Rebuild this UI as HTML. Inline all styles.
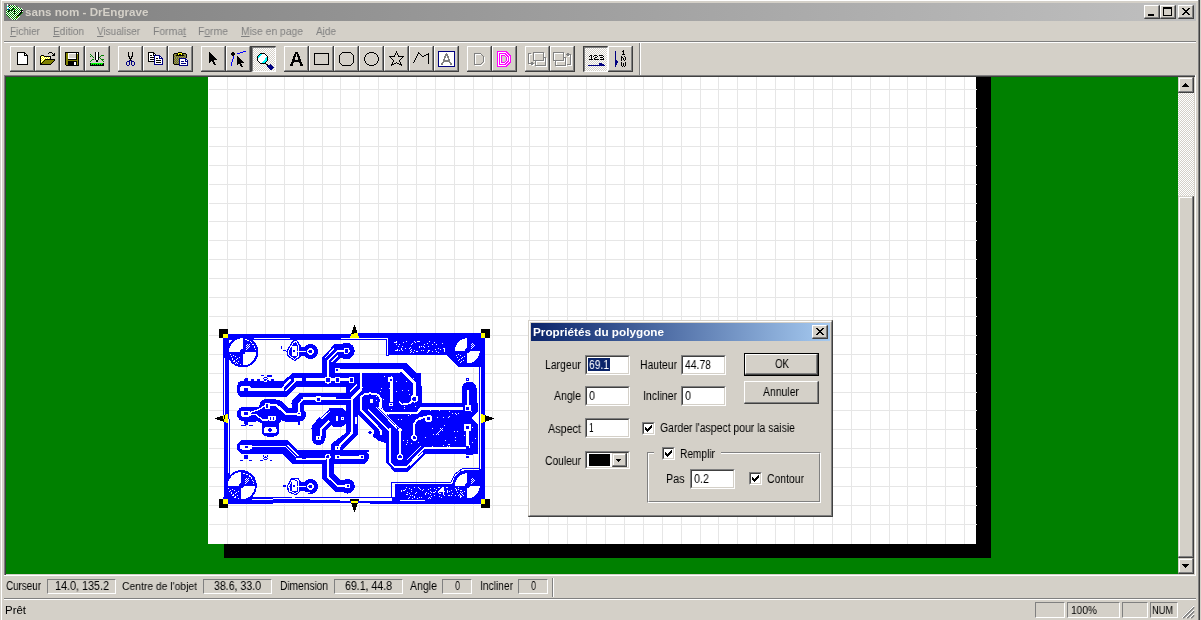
<!DOCTYPE html>
<html><head><meta charset="utf-8"><title>DrEngrave</title>
<style>
html,body{margin:0;padding:0;}
body{width:1201px;height:620px;overflow:hidden;position:relative;background:#D4D0C8;font-family:"Liberation Sans",sans-serif;font-size:11px;}
body div,body span.t,body svg{position:absolute;box-sizing:border-box;}
span.t{white-space:nowrap;transform-origin:0 0;display:block;will-change:transform;}
span.t u{text-decoration:underline;text-underline-offset:1px;}
.btn{border-style:solid;border-width:1px 2px 2px 1px;border-color:#fff #404040 #404040 #fff;background:#D4D0C8;}
.btn:after{content:"";position:absolute;left:0;top:0;right:-1px;bottom:-1px;border-right:1px solid #808080;border-bottom:1px solid #808080;}
.tb{border:1px solid;border-color:#fff #808080 #808080 #fff;}
.tb:after{content:"";position:absolute;left:-1px;top:-1px;right:-2px;bottom:-2px;border-right:1px solid #404040;border-bottom:1px solid #404040;}
.sunk{border:1px solid;border-color:#808080 #fff #fff #808080;}
.edit{border:1px solid;border-color:#808080 #fff #fff #808080;background:#fff;}
.edit:after{content:"";position:absolute;left:0;top:0;right:0;bottom:0;border:1px solid;border-color:#404040 #D4D0C8 #D4D0C8 #404040;}
.chk{background:repeating-conic-gradient(#fff 0% 25%,#D4D0C8 0% 50%) 0 0/2px 2px;}
</style></head><body>
<div style="left:0px;top:0px;width:1201px;height:1px;background:#fff;"></div>
<div style="left:0px;top:0px;width:1px;height:620px;background:#D4D0C8;"></div>
<div style="left:1px;top:0px;width:1px;height:620px;background:#fff;"></div>
<div style="left:1198px;top:0px;width:1px;height:620px;background:#808080;"></div>
<div style="left:1199px;top:0px;width:1px;height:620px;background:#404040;"></div>
<div style="left:1200px;top:0px;width:1px;height:620px;background:#D4D0C8;"></div>
<div style="left:4px;top:3px;width:1192px;height:18px;background:linear-gradient(to right,#808080 0%,#C0C0C0 100%);"></div>
<span class="t" style="left:24.5px;top:4px;font-size:11px;line-height:16px;color:#D4D0C8;font-weight:bold;transform:scaleX(1.0578);">sans nom - DrEngrave</span>
<div class="btn" style="left:1144px;top:5px;width:16px;height:14px;"></div>
<div style="left:1148px;top:14px;width:6px;height:2px;background:#000;"></div>
<div class="btn" style="left:1160px;top:5px;width:16px;height:14px;"></div>
<div style="left:1163px;top:7px;width:9px;height:9px;border:1px solid #000;border-top-width:2px;"></div>
<div class="btn" style="left:1178px;top:5px;width:16px;height:14px;"></div>
<svg style="left:1182px;top:8px" width="8" height="7" viewBox="0 0 8 7" shape-rendering="crispEdges"><path d="M0 0h2v1h-2zM6 0h2v1h-2zM1 1h2v1h-2zM5 1h2v1h-2zM2 2h4v1h-4zM3 3h2v1h-2zM2 4h4v1h-4zM1 5h2v1h-2zM5 5h2v1h-2zM0 6h2v1h-2zM6 6h2v1h-2z" fill="#000"/></svg>
<span class="t" style="left:10px;top:23px;font-size:11px;line-height:16px;color:#808080;transform:scaleX(0.9090);"><u>F</u>ichier</span>
<span class="t" style="left:53px;top:23px;font-size:11px;line-height:16px;color:#808080;transform:scaleX(0.9217);"><u>E</u>dition</span>
<span class="t" style="left:97px;top:23px;font-size:11px;line-height:16px;color:#808080;transform:scaleX(0.9056);"><u>V</u>isualiser</span>
<span class="t" style="left:153px;top:23px;font-size:11px;line-height:16px;color:#808080;transform:scaleX(0.9472);">Forma<u>t</u></span>
<span class="t" style="left:198px;top:23px;font-size:11px;line-height:16px;color:#808080;transform:scaleX(0.9440);">F<u>o</u>rme</span>
<span class="t" style="left:241px;top:23px;font-size:11px;line-height:16px;color:#808080;transform:scaleX(0.9388);"><u>M</u>ise en page</span>
<span class="t" style="left:316px;top:23px;font-size:11px;line-height:16px;color:#808080;transform:scaleX(0.9084);">A<u>i</u>de</span>
<div style="left:4px;top:41px;width:1192px;height:1px;background:#808080;"></div>
<div style="left:4px;top:42px;width:1192px;height:1px;background:#fff;"></div>
<div class="tb" style="left:10px;top:46px;width:24px;height:25px;"></div>
<div class="tb" style="left:35px;top:46px;width:24px;height:25px;"></div>
<div class="tb" style="left:60px;top:46px;width:24px;height:25px;"></div>
<div class="tb" style="left:85px;top:46px;width:24px;height:25px;"></div>
<div class="tb" style="left:118px;top:46px;width:24px;height:25px;"></div>
<div class="tb" style="left:143px;top:46px;width:24px;height:25px;"></div>
<div class="tb" style="left:168px;top:46px;width:24px;height:25px;"></div>
<div class="tb" style="left:201px;top:46px;width:24px;height:25px;"></div>
<div class="tb" style="left:226px;top:46px;width:24px;height:25px;"></div>
<div class="chk" style="left:251px;top:46px;width:25px;height:26px;border-style:solid;border-width:2px 1px 1px 2px;border-color:#404040 #fff #fff #404040;"></div>
<div style="left:252px;top:47px;width:23px;height:24px;border-left:1px solid #808080;border-top:1px solid #808080;"></div>
<div class="tb" style="left:284px;top:46px;width:24px;height:25px;"></div>
<div class="tb" style="left:309px;top:46px;width:24px;height:25px;"></div>
<div class="tb" style="left:334px;top:46px;width:24px;height:25px;"></div>
<div class="tb" style="left:359px;top:46px;width:24px;height:25px;"></div>
<div class="tb" style="left:384px;top:46px;width:24px;height:25px;"></div>
<div class="tb" style="left:409px;top:46px;width:24px;height:25px;"></div>
<div class="tb" style="left:434px;top:46px;width:24px;height:25px;"></div>
<div class="tb" style="left:467px;top:46px;width:24px;height:25px;"></div>
<div class="tb" style="left:492px;top:46px;width:24px;height:25px;"></div>
<div class="tb" style="left:525px;top:46px;width:24px;height:25px;"></div>
<div class="tb" style="left:550px;top:46px;width:24px;height:25px;"></div>
<div class="chk" style="left:583px;top:46px;width:25px;height:26px;border-style:solid;border-width:2px 1px 1px 2px;border-color:#404040 #fff #fff #404040;"></div>
<div style="left:584px;top:47px;width:23px;height:24px;border-left:1px solid #808080;border-top:1px solid #808080;"></div>
<div class="tb" style="left:608px;top:46px;width:24px;height:25px;"></div>
<div style="left:639px;top:43px;width:1px;height:32px;background:#808080;"></div>
<div style="left:640px;top:43px;width:1px;height:32px;background:#fff;"></div>
<svg style="left:17px;top:52px" width="11" height="13" shape-rendering="crispEdges"><path fill="#000" d="M0 0h8v1h-8zM0 1h1v1h-1zM7 1h2v1h-2zM0 2h1v1h-1zM7 2h1v1h-1zM9 2h1v1h-1zM0 3h1v1h-1zM7 3h4v1h-4zM0 4h1v1h-1zM10 4h1v1h-1zM0 5h1v1h-1zM10 5h1v1h-1zM0 6h1v1h-1zM10 6h1v1h-1zM0 7h1v1h-1zM10 7h1v1h-1zM0 8h1v1h-1zM10 8h1v1h-1zM0 9h1v1h-1zM10 9h1v1h-1zM0 10h1v1h-1zM10 10h1v1h-1zM0 11h1v1h-1zM10 11h1v1h-1zM0 12h11v1h-11z"/><path fill="#fff" d="M1 1h6v1h-6zM1 2h6v1h-6zM8 2h1v1h-1zM1 3h6v1h-6zM1 4h9v1h-9zM1 5h9v1h-9zM1 6h9v1h-9zM1 7h9v1h-9zM1 8h9v1h-9zM1 9h9v1h-9zM1 10h9v1h-9zM1 11h9v1h-9z"/></svg>
<svg style="left:40px;top:52px" width="15" height="13" shape-rendering="crispEdges"><path fill="#000" d="M9 0h3v1h-3zM8 1h1v1h-1zM12 1h1v1h-1zM14 1h1v1h-1zM13 2h2v1h-2zM1 3h3v1h-3zM12 3h3v1h-3zM0 4h1v1h-1zM4 4h7v1h-7zM0 5h1v1h-1zM10 5h1v1h-1zM0 6h1v1h-1zM10 6h1v1h-1zM0 7h1v1h-1zM5 7h10v1h-10zM0 8h1v1h-1zM4 8h1v1h-1zM14 8h1v1h-1zM0 9h1v1h-1zM3 9h1v1h-1zM13 9h1v1h-1zM0 10h1v1h-1zM2 10h1v1h-1zM12 10h1v1h-1zM0 11h2v1h-2zM11 11h1v1h-1zM0 12h11v1h-11z"/><path fill="#FFFF00" d="M1 4h1v1h-1zM3 4h1v1h-1zM2 5h1v1h-1zM4 5h1v1h-1zM6 5h1v1h-1zM8 5h1v1h-1zM1 6h1v1h-1zM3 6h1v1h-1zM5 6h1v1h-1zM7 6h1v1h-1zM9 6h1v1h-1zM2 7h1v1h-1zM4 7h1v1h-1zM1 8h1v1h-1zM3 8h1v1h-1zM2 9h1v1h-1zM1 10h1v1h-1z"/><path fill="#fff" d="M2 4h1v1h-1zM1 5h1v1h-1zM3 5h1v1h-1zM5 5h1v1h-1zM7 5h1v1h-1zM9 5h1v1h-1zM2 6h1v1h-1zM4 6h1v1h-1zM6 6h1v1h-1zM8 6h1v1h-1zM1 7h1v1h-1zM3 7h1v1h-1zM2 8h1v1h-1zM1 9h1v1h-1z"/><path fill="#808000" d="M5 8h9v1h-9zM4 9h9v1h-9zM3 10h9v1h-9zM2 11h9v1h-9z"/></svg>
<svg style="left:65px;top:52px" width="14" height="14" shape-rendering="crispEdges"><path fill="#000" d="M0 0h14v1h-14zM0 1h1v1h-1zM11 1h1v1h-1zM13 1h1v1h-1zM0 2h1v1h-1zM11 2h1v1h-1zM13 2h1v1h-1zM0 3h1v1h-1zM11 3h1v1h-1zM13 3h1v1h-1zM0 4h1v1h-1zM11 4h1v1h-1zM13 4h1v1h-1zM0 5h1v1h-1zM11 5h1v1h-1zM13 5h1v1h-1zM0 6h1v1h-1zM11 6h1v1h-1zM13 6h1v1h-1zM0 7h1v1h-1zM3 7h9v1h-9zM13 7h1v1h-1zM0 8h1v1h-1zM13 8h1v1h-1zM0 9h1v1h-1zM3 9h9v1h-9zM13 9h1v1h-1zM0 10h1v1h-1zM3 10h6v1h-6zM11 10h1v1h-1zM13 10h1v1h-1zM0 11h1v1h-1zM3 11h6v1h-6zM11 11h1v1h-1zM13 11h1v1h-1zM0 12h1v1h-1zM3 12h6v1h-6zM11 12h1v1h-1zM13 12h1v1h-1zM1 13h13v1h-13z"/><path fill="#808000" d="M1 1h2v1h-2zM1 2h2v1h-2zM12 2h1v1h-1zM1 3h2v1h-2zM12 3h1v1h-1zM1 4h2v1h-2zM12 4h1v1h-1zM1 5h2v1h-2zM12 5h1v1h-1zM1 6h2v1h-2zM12 6h1v1h-1zM1 7h2v1h-2zM12 7h1v1h-1zM1 8h12v1h-12zM1 9h2v1h-2zM12 9h1v1h-1zM1 10h2v1h-2zM12 10h1v1h-1zM1 11h2v1h-2zM12 11h1v1h-1zM1 12h2v1h-2zM12 12h1v1h-1z"/><path fill="#fff" d="M3 1h8v1h-8zM12 1h1v1h-1zM3 2h1v1h-1zM3 3h1v1h-1zM3 4h1v1h-1zM3 5h1v1h-1zM3 6h8v1h-8zM9 10h2v1h-2zM9 11h2v1h-2zM9 12h2v1h-2z"/><path fill="#D4D0C8" d="M4 2h7v1h-7zM4 3h7v1h-7zM4 4h7v1h-7zM4 5h7v1h-7z"/></svg>
<svg style="left:90px;top:52px" width="14" height="14" shape-rendering="crispEdges"><path fill="#000" d="M5 0h1v1h-1zM8 0h1v1h-1zM5 1h1v1h-1zM8 1h1v1h-1zM5 2h1v1h-1zM8 2h1v1h-1zM5 3h1v1h-1zM8 3h1v1h-1zM5 4h1v1h-1zM8 4h1v1h-1zM5 5h1v1h-1zM8 5h1v1h-1zM5 6h1v1h-1zM8 6h1v1h-1zM5 7h1v1h-1zM8 7h1v1h-1zM6 8h2v1h-2zM6 9h2v1h-2zM0 11h1v1h-1zM13 11h1v1h-1zM0 12h1v1h-1zM2 12h1v1h-1zM4 12h1v1h-1zM6 12h1v1h-1zM8 12h1v1h-1zM10 12h1v1h-1zM12 12h2v1h-2zM0 13h14v1h-14z"/><path fill="#fff" d="M6 0h2v1h-2zM6 1h2v1h-2zM6 2h2v1h-2zM6 3h2v1h-2zM6 4h2v1h-2zM6 5h2v1h-2zM6 6h2v1h-2zM6 7h2v1h-2z"/><path fill="#008000" d="M0 2h1v1h-1zM1 3h1v1h-1zM11 3h3v1h-3zM0 4h1v1h-1zM2 4h1v1h-1zM10 4h1v1h-1zM3 5h1v1h-1zM9 5h1v1h-1zM10 6h1v1h-1zM2 7h2v1h-2zM11 7h3v1h-3zM1 8h1v1h-1zM12 8h1v1h-1zM0 9h1v1h-1zM13 9h1v1h-1z"/><path fill="#00FF00" d="M1 11h12v1h-12zM1 12h1v1h-1zM3 12h1v1h-1zM5 12h1v1h-1zM7 12h1v1h-1zM9 12h1v1h-1zM11 12h1v1h-1z"/></svg>
<svg style="left:126px;top:52px" width="9" height="14" shape-rendering="crispEdges"><path fill="#000" d="M2 0h1v1h-1zM6 0h1v1h-1zM2 1h1v1h-1zM6 1h1v1h-1zM2 2h1v1h-1zM6 2h1v1h-1zM2 3h1v1h-1zM6 3h1v1h-1zM2 4h2v1h-2zM5 4h2v1h-2zM3 5h1v1h-1zM5 5h1v1h-1zM3 6h3v1h-3zM4 7h1v1h-1zM4 8h1v1h-1z"/><path fill="#000080" d="M3 8h1v1h-1zM5 8h1v1h-1zM1 9h3v1h-3zM5 9h3v1h-3zM0 10h1v1h-1zM3 10h1v1h-1zM5 10h1v1h-1zM8 10h1v1h-1zM0 11h1v1h-1zM3 11h1v1h-1zM5 11h1v1h-1zM8 11h1v1h-1zM0 12h1v1h-1zM3 12h1v1h-1zM5 12h1v1h-1zM8 12h1v1h-1zM1 13h2v1h-2zM6 13h2v1h-2z"/></svg>
<svg style="left:148px;top:52px" width="15" height="13" shape-rendering="crispEdges"><path fill="#000" d="M0 0h6v1h-6zM0 1h1v1h-1zM5 1h2v1h-2zM0 2h1v1h-1zM5 2h1v1h-1zM7 2h1v1h-1zM0 3h1v1h-1zM2 3h2v1h-2zM5 3h1v1h-1zM0 4h1v1h-1zM0 5h1v1h-1zM2 5h4v1h-4zM0 6h1v1h-1zM8 6h2v1h-2zM0 7h1v1h-1zM2 7h4v1h-4zM0 8h1v1h-1zM8 8h5v1h-5zM0 9h6v1h-6zM8 10h5v1h-5z"/><path fill="#fff" d="M1 1h4v1h-4zM1 2h4v1h-4zM6 2h1v1h-1zM1 3h1v1h-1zM4 3h1v1h-1zM1 4h5v1h-5zM7 4h4v1h-4zM1 5h1v1h-1zM7 5h4v1h-4zM12 5h1v1h-1zM1 6h5v1h-5zM7 6h1v1h-1zM10 6h1v1h-1zM1 7h1v1h-1zM7 7h7v1h-7zM1 8h5v1h-5zM7 8h1v1h-1zM13 8h1v1h-1zM7 9h7v1h-7zM7 10h1v1h-1zM13 10h1v1h-1zM7 11h7v1h-7z"/><path fill="#000080" d="M6 3h6v1h-6zM6 4h1v1h-1zM11 4h2v1h-2zM6 5h1v1h-1zM11 5h1v1h-1zM13 5h1v1h-1zM6 6h1v1h-1zM11 6h4v1h-4zM6 7h1v1h-1zM14 7h1v1h-1zM6 8h1v1h-1zM14 8h1v1h-1zM6 9h1v1h-1zM14 9h1v1h-1zM6 10h1v1h-1zM14 10h1v1h-1zM6 11h1v1h-1zM14 11h1v1h-1zM6 12h9v1h-9z"/></svg>
<svg style="left:173px;top:52px" width="15" height="14" shape-rendering="crispEdges"><path fill="#000" d="M5 0h4v1h-4zM1 1h4v1h-4zM9 1h4v1h-4zM0 2h1v1h-1zM4 2h1v1h-1zM6 2h2v1h-2zM9 2h1v1h-1zM13 2h1v1h-1zM0 3h1v1h-1zM3 3h8v1h-8zM13 3h1v1h-1zM0 4h1v1h-1zM13 4h1v1h-1zM0 5h1v1h-1zM13 5h1v1h-1zM0 6h1v1h-1zM0 7h1v1h-1zM0 8h1v1h-1zM0 9h1v1h-1zM0 10h1v1h-1zM0 11h1v1h-1zM1 12h5v1h-5z"/><path fill="#FFFF00" d="M5 1h4v1h-4zM5 2h1v1h-1zM8 2h1v1h-1z"/><path fill="#808000" d="M1 2h1v1h-1zM3 2h1v1h-1zM10 2h1v1h-1zM12 2h1v1h-1zM2 3h1v1h-1zM11 3h1v1h-1zM1 4h1v1h-1zM3 4h1v1h-1zM5 4h1v1h-1zM7 4h1v1h-1zM9 4h1v1h-1zM11 4h1v1h-1zM2 5h1v1h-1zM4 5h1v1h-1zM6 5h1v1h-1zM8 5h1v1h-1zM10 5h1v1h-1zM12 5h1v1h-1zM2 6h1v1h-1zM4 6h1v1h-1zM1 7h1v1h-1zM3 7h1v1h-1zM5 7h1v1h-1zM2 8h1v1h-1zM4 8h1v1h-1zM1 9h1v1h-1zM3 9h1v1h-1zM5 9h1v1h-1zM2 10h1v1h-1zM4 10h1v1h-1zM1 11h1v1h-1zM3 11h1v1h-1zM5 11h1v1h-1z"/><path fill="#808080" d="M2 2h1v1h-1zM11 2h1v1h-1zM1 3h1v1h-1zM12 3h1v1h-1zM2 4h1v1h-1zM4 4h1v1h-1zM6 4h1v1h-1zM8 4h1v1h-1zM10 4h1v1h-1zM12 4h1v1h-1zM1 5h1v1h-1zM3 5h1v1h-1zM5 5h1v1h-1zM7 5h1v1h-1zM9 5h1v1h-1zM11 5h1v1h-1zM1 6h1v1h-1zM3 6h1v1h-1zM5 6h1v1h-1zM2 7h1v1h-1zM4 7h1v1h-1zM1 8h1v1h-1zM3 8h1v1h-1zM5 8h1v1h-1zM2 9h1v1h-1zM4 9h1v1h-1zM1 10h1v1h-1zM3 10h1v1h-1zM5 10h1v1h-1zM2 11h1v1h-1zM4 11h1v1h-1z"/><path fill="#000080" d="M6 6h7v1h-7zM6 7h1v1h-1zM12 7h2v1h-2zM6 8h1v1h-1zM12 8h1v1h-1zM14 8h1v1h-1zM6 9h1v1h-1zM8 9h3v1h-3zM12 9h3v1h-3zM6 10h1v1h-1zM14 10h1v1h-1zM6 11h1v1h-1zM8 11h5v1h-5zM14 11h1v1h-1zM6 12h1v1h-1zM14 12h1v1h-1zM6 13h9v1h-9z"/><path fill="#fff" d="M7 7h5v1h-5zM7 8h5v1h-5zM13 8h1v1h-1zM7 9h1v1h-1zM11 9h1v1h-1zM7 10h7v1h-7zM7 11h1v1h-1zM13 11h1v1h-1zM7 12h7v1h-7z"/></svg>
<svg style="left:209px;top:52px" width="8" height="13" shape-rendering="crispEdges"><path fill="#000" d="M0 0h1v1h-1zM0 1h2v1h-2zM0 2h3v1h-3zM0 3h4v1h-4zM0 4h5v1h-5zM0 5h6v1h-6zM0 6h7v1h-7zM0 7h8v1h-8zM0 8h5v1h-5zM0 9h2v1h-2zM3 9h2v1h-2zM0 10h1v1h-1zM4 10h2v1h-2zM4 11h2v1h-2zM5 12h2v1h-2z"/></svg>
<svg style="left:231px;top:51px" width="15" height="16" shape-rendering="crispEdges"><path fill="#0000FF" d="M12 0h3v1h-3zM9 1h3v1h-3zM6 2h3v1h-3zM2 5h1v1h-1zM2 6h1v1h-1zM2 7h1v1h-1zM1 8h1v1h-1zM1 9h1v1h-1zM1 10h1v1h-1zM0 11h1v1h-1zM0 12h1v1h-1zM0 13h1v1h-1zM0 14h1v1h-1z"/><path fill="#000" d="M1 1h2v1h-2zM0 2h4v1h-4zM0 3h4v1h-4zM1 4h2v1h-2zM6 5h1v1h-1zM6 6h2v1h-2zM6 7h3v1h-3zM6 8h4v1h-4zM6 9h5v1h-5zM6 10h6v1h-6zM6 11h7v1h-7zM6 12h4v1h-4zM6 13h1v1h-1zM9 13h2v1h-2zM9 14h2v1h-2zM10 15h2v1h-2z"/></svg>
<svg style="left:257px;top:53px" width="17" height="17" shape-rendering="crispEdges"><path fill="#000" d="M3 0h5v1h-5zM2 1h1v1h-1zM8 1h1v1h-1zM1 2h1v1h-1zM9 2h1v1h-1zM0 3h1v1h-1zM10 3h1v1h-1zM0 4h1v1h-1zM10 4h1v1h-1zM0 5h1v1h-1zM10 5h1v1h-1zM0 6h1v1h-1zM10 6h1v1h-1zM0 7h1v1h-1zM10 7h1v1h-1zM1 8h1v1h-1zM9 8h1v1h-1zM2 9h1v1h-1zM8 9h1v1h-1zM3 10h6v1h-6zM9 11h2v1h-2zM10 12h1v1h-1z"/><path fill="#00FFFF" d="M3 1h2v1h-2zM2 2h2v1h-2zM1 3h2v1h-2zM1 4h1v1h-1zM9 4h1v1h-1zM8 5h2v1h-2zM8 6h2v1h-2zM7 7h3v1h-3zM6 8h3v1h-3zM5 9h3v1h-3z"/><path fill="#fff" d="M5 1h3v1h-3zM4 2h5v1h-5zM3 3h7v1h-7zM2 4h7v1h-7zM1 5h7v1h-7zM1 6h7v1h-7zM1 7h6v1h-6zM2 8h4v1h-4zM3 9h2v1h-2z"/><path fill="#000080" d="M13 11h1v1h-1zM11 12h4v1h-4zM10 13h6v1h-6zM11 14h6v1h-6zM12 15h4v1h-4zM13 16h2v1h-2z"/></svg>
<svg style="left:290px;top:52px" width="13" height="14" shape-rendering="crispEdges"><path fill="#000" d="M5 0h3v1h-3zM5 1h3v1h-3zM4 2h2v1h-2zM7 2h2v1h-2zM4 3h2v1h-2zM7 3h2v1h-2zM3 4h3v1h-3zM7 4h3v1h-3zM3 5h2v1h-2zM8 5h2v1h-2zM3 6h2v1h-2zM8 6h2v1h-2zM2 7h3v1h-3zM8 7h3v1h-3zM2 8h9v1h-9zM2 9h9v1h-9zM1 10h3v1h-3zM9 10h3v1h-3zM1 11h2v1h-2zM10 11h2v1h-2zM0 12h3v1h-3zM10 12h3v1h-3zM0 13h3v1h-3zM10 13h3v1h-3z"/></svg>
<div style="left:314px;top:53px;width:15px;height:12px;border:1px solid #000;"></div>
<svg style="left:339px;top:52px" width="15" height="14" shape-rendering="crispEdges"><path fill="#000" d="M3 0h9v1h-9zM2 1h1v1h-1zM12 1h1v1h-1zM1 2h1v1h-1zM13 2h1v1h-1zM0 3h1v1h-1zM14 3h1v1h-1zM0 4h1v1h-1zM14 4h1v1h-1zM0 5h1v1h-1zM14 5h1v1h-1zM0 6h1v1h-1zM14 6h1v1h-1zM0 7h1v1h-1zM14 7h1v1h-1zM0 8h1v1h-1zM14 8h1v1h-1zM0 9h1v1h-1zM14 9h1v1h-1zM0 10h1v1h-1zM14 10h1v1h-1zM1 11h1v1h-1zM13 11h1v1h-1zM2 12h1v1h-1zM12 12h1v1h-1zM3 13h9v1h-9z"/></svg>
<svg style="left:364px;top:52px" width="15" height="14" shape-rendering="crispEdges"><path fill="#000" d="M5 0h5v1h-5zM3 1h2v1h-2zM10 1h2v1h-2zM2 2h1v1h-1zM12 2h1v1h-1zM1 3h1v1h-1zM13 3h1v1h-1zM1 4h1v1h-1zM13 4h1v1h-1zM0 5h1v1h-1zM14 5h1v1h-1zM0 6h1v1h-1zM14 6h1v1h-1zM0 7h1v1h-1zM14 7h1v1h-1zM0 8h1v1h-1zM14 8h1v1h-1zM1 9h1v1h-1zM13 9h1v1h-1zM1 10h1v1h-1zM13 10h1v1h-1zM2 11h1v1h-1zM12 11h1v1h-1zM3 12h2v1h-2zM10 12h2v1h-2zM5 13h5v1h-5z"/></svg>
<svg style="left:389px;top:51px" width="15" height="15" shape-rendering="crispEdges"><path fill="#000" d="M7 0h1v1h-1zM7 1h1v1h-1zM6 2h1v1h-1zM8 2h1v1h-1zM6 3h1v1h-1zM8 3h1v1h-1zM5 4h1v1h-1zM9 4h1v1h-1zM0 5h6v1h-6zM9 5h6v1h-6zM1 6h1v1h-1zM13 6h1v1h-1zM2 7h1v1h-1zM12 7h1v1h-1zM3 8h1v1h-1zM11 8h1v1h-1zM4 9h1v1h-1zM10 9h1v1h-1zM4 10h1v1h-1zM10 10h1v1h-1zM3 11h1v1h-1zM7 11h1v1h-1zM11 11h1v1h-1zM3 12h1v1h-1zM5 12h2v1h-2zM8 12h2v1h-2zM11 12h1v1h-1zM2 13h3v1h-3zM10 13h3v1h-3zM2 14h1v1h-1zM12 14h1v1h-1z"/></svg>
<svg style="left:413px;top:52px" width="16" height="12" shape-rendering="crispEdges"><path fill="#000" d="M5 0h1v1h-1zM5 1h2v1h-2zM15 1h1v1h-1zM4 2h1v1h-1zM7 2h1v1h-1zM13 2h3v1h-3zM4 3h1v1h-1zM8 3h1v1h-1zM11 3h2v1h-2zM15 3h1v1h-1zM3 4h1v1h-1zM9 4h2v1h-2zM15 4h1v1h-1zM3 5h1v1h-1zM15 5h1v1h-1zM2 6h1v1h-1zM15 6h1v1h-1zM2 7h1v1h-1zM15 7h1v1h-1zM1 8h1v1h-1zM15 8h1v1h-1zM1 9h1v1h-1zM15 9h1v1h-1zM0 10h1v1h-1zM15 10h1v1h-1zM15 11h1v1h-1z"/></svg>
<div style="left:438px;top:51px;width:17px;height:16px;border:1px solid #000080;background:#fff;"></div>
<svg style="left:441px;top:53px" width="11" height="12" shape-rendering="crispEdges"><path fill="#808080" d="M5 0h1v1h-1zM4 1h3v1h-3zM4 2h3v1h-3zM3 3h2v1h-2zM6 3h2v1h-2zM3 4h2v1h-2zM6 4h2v1h-2zM3 5h1v1h-1zM7 5h1v1h-1zM2 6h2v1h-2zM7 6h2v1h-2zM2 7h7v1h-7zM2 8h7v1h-7zM1 9h2v1h-2zM8 9h2v1h-2zM0 10h2v1h-2zM9 10h2v1h-2zM0 11h2v1h-2zM9 11h2v1h-2z"/></svg>
<svg style="left:474px;top:53px" width="11" height="13" shape-rendering="crispEdges"><path fill="#808080" d="M0 0h7v1h-7zM0 1h1v1h-1zM7 1h1v1h-1zM0 2h1v1h-1zM8 2h1v1h-1zM0 3h1v1h-1zM9 3h1v1h-1zM0 4h1v1h-1zM9 4h1v1h-1zM0 5h1v1h-1zM9 5h1v1h-1zM0 6h1v1h-1zM9 6h1v1h-1zM0 7h1v1h-1zM9 7h1v1h-1zM0 8h1v1h-1zM9 8h1v1h-1zM0 9h1v1h-1zM8 9h1v1h-1zM0 10h1v1h-1zM7 10h1v1h-1zM0 11h7v1h-7z"/><path fill="#fff" d="M1 1h6v1h-6zM1 2h1v1h-1zM1 3h1v1h-1zM1 4h1v1h-1zM10 4h1v1h-1zM1 5h1v1h-1zM10 5h1v1h-1zM1 6h1v1h-1zM10 6h1v1h-1zM1 7h1v1h-1zM10 7h1v1h-1zM1 8h1v1h-1zM10 8h1v1h-1zM1 9h1v1h-1zM10 9h1v1h-1zM1 10h1v1h-1zM9 10h1v1h-1zM8 11h1v1h-1zM1 12h7v1h-7z"/></svg>
<svg style="left:497px;top:51px" width="14" height="16" shape-rendering="crispEdges"><path fill="#FF00FF" d="M0 0h10v1h-10zM0 1h1v1h-1zM9 1h2v1h-2zM0 2h1v1h-1zM2 2h7v1h-7zM10 2h2v1h-2zM0 3h1v1h-1zM2 3h1v1h-1zM8 3h2v1h-2zM11 3h2v1h-2zM0 4h1v1h-1zM2 4h1v1h-1zM4 4h4v1h-4zM9 4h2v1h-2zM12 4h2v1h-2zM0 5h1v1h-1zM2 5h1v1h-1zM4 5h1v1h-1zM8 5h1v1h-1zM10 5h2v1h-2zM13 5h1v1h-1zM0 6h1v1h-1zM2 6h1v1h-1zM4 6h1v1h-1zM9 6h1v1h-1zM11 6h1v1h-1zM13 6h1v1h-1zM0 7h1v1h-1zM2 7h1v1h-1zM4 7h1v1h-1zM9 7h1v1h-1zM11 7h1v1h-1zM13 7h1v1h-1zM0 8h1v1h-1zM2 8h1v1h-1zM4 8h1v1h-1zM9 8h1v1h-1zM11 8h1v1h-1zM13 8h1v1h-1zM0 9h1v1h-1zM2 9h1v1h-1zM4 9h1v1h-1zM9 9h1v1h-1zM11 9h1v1h-1zM13 9h1v1h-1zM0 10h1v1h-1zM2 10h1v1h-1zM4 10h1v1h-1zM8 10h1v1h-1zM10 10h2v1h-2zM13 10h1v1h-1zM0 11h1v1h-1zM2 11h1v1h-1zM4 11h4v1h-4zM9 11h2v1h-2zM12 11h2v1h-2zM0 12h1v1h-1zM2 12h1v1h-1zM8 12h2v1h-2zM11 12h2v1h-2zM0 13h1v1h-1zM2 13h7v1h-7zM10 13h2v1h-2zM0 14h1v1h-1zM9 14h2v1h-2zM0 15h10v1h-10z"/><path fill="#fff" d="M1 1h8v1h-8zM1 2h1v1h-1zM9 2h1v1h-1zM1 3h1v1h-1zM3 3h5v1h-5zM10 3h1v1h-1zM1 4h1v1h-1zM3 4h1v1h-1zM8 4h1v1h-1zM11 4h1v1h-1zM1 5h1v1h-1zM3 5h1v1h-1zM9 5h1v1h-1zM12 5h1v1h-1zM1 6h1v1h-1zM3 6h1v1h-1zM10 6h1v1h-1zM12 6h1v1h-1zM1 7h1v1h-1zM3 7h1v1h-1zM10 7h1v1h-1zM12 7h1v1h-1zM1 8h1v1h-1zM3 8h1v1h-1zM10 8h1v1h-1zM12 8h1v1h-1zM1 9h1v1h-1zM3 9h1v1h-1zM10 9h1v1h-1zM12 9h1v1h-1zM1 10h1v1h-1zM3 10h1v1h-1zM9 10h1v1h-1zM12 10h1v1h-1zM1 11h1v1h-1zM3 11h1v1h-1zM8 11h1v1h-1zM11 11h1v1h-1zM1 12h1v1h-1zM3 12h5v1h-5zM10 12h1v1h-1zM1 13h1v1h-1zM9 13h1v1h-1zM1 14h8v1h-8z"/><path fill="#D4D0C8" d="M5 5h3v1h-3zM5 6h4v1h-4zM5 7h4v1h-4zM5 8h4v1h-4zM5 9h4v1h-4zM5 10h3v1h-3z"/></svg>
<svg style="left:528px;top:52px" width="19" height="15" shape-rendering="crispEdges"><path fill="#808080" d="M5 0h11v1h-11zM0 1h3v1h-3zM5 1h1v1h-1zM15 1h1v1h-1zM0 2h1v1h-1zM5 2h1v1h-1zM15 2h1v1h-1zM0 3h1v1h-1zM5 3h1v1h-1zM15 3h1v1h-1zM0 4h1v1h-1zM5 4h1v1h-1zM15 4h1v1h-1zM0 5h1v1h-1zM5 5h1v1h-1zM15 5h3v1h-3zM0 6h1v1h-1zM5 6h1v1h-1zM15 6h1v1h-1zM17 6h1v1h-1zM0 7h1v1h-1zM5 7h1v1h-1zM15 7h1v1h-1zM17 7h1v1h-1zM0 8h1v1h-1zM5 8h11v1h-11zM17 8h1v1h-1zM0 9h1v1h-1zM7 9h1v1h-1zM17 9h1v1h-1zM0 10h1v1h-1zM3 10h2v1h-2zM7 10h1v1h-1zM17 10h1v1h-1zM0 11h6v1h-6zM7 11h1v1h-1zM17 11h1v1h-1zM3 12h2v1h-2zM7 12h1v1h-1zM17 12h1v1h-1zM7 13h11v1h-11z"/><path fill="#fff" d="M6 1h9v1h-9zM16 1h1v1h-1zM1 2h3v1h-3zM6 2h1v1h-1zM16 2h1v1h-1zM1 3h1v1h-1zM6 3h1v1h-1zM16 3h1v1h-1zM1 4h1v1h-1zM6 4h1v1h-1zM16 4h1v1h-1zM1 5h1v1h-1zM6 5h1v1h-1zM1 6h1v1h-1zM6 6h1v1h-1zM16 6h1v1h-1zM18 6h1v1h-1zM1 7h1v1h-1zM6 7h1v1h-1zM16 7h1v1h-1zM18 7h1v1h-1zM1 8h1v1h-1zM16 8h1v1h-1zM18 8h1v1h-1zM1 9h1v1h-1zM6 9h1v1h-1zM8 9h9v1h-9zM18 9h1v1h-1zM1 10h1v1h-1zM8 10h1v1h-1zM18 10h1v1h-1zM8 11h1v1h-1zM18 11h1v1h-1zM1 12h2v1h-2zM5 12h2v1h-2zM8 12h1v1h-1zM18 12h1v1h-1zM4 13h2v1h-2zM18 13h1v1h-1zM8 14h11v1h-11z"/></svg>
<svg style="left:553px;top:52px" width="19" height="15" shape-rendering="crispEdges"><path fill="#808080" d="M0 0h11v1h-11zM0 1h1v1h-1zM10 1h1v1h-1zM14 1h2v1h-2zM0 2h1v1h-1zM10 2h1v1h-1zM13 2h5v1h-5zM0 3h1v1h-1zM10 3h1v1h-1zM14 3h2v1h-2zM17 3h1v1h-1zM0 4h1v1h-1zM10 4h1v1h-1zM17 4h1v1h-1zM0 5h1v1h-1zM10 5h3v1h-3zM17 5h1v1h-1zM0 6h1v1h-1zM10 6h1v1h-1zM12 6h1v1h-1zM17 6h1v1h-1zM0 7h1v1h-1zM10 7h1v1h-1zM12 7h1v1h-1zM17 7h1v1h-1zM0 8h11v1h-11zM12 8h1v1h-1zM17 8h1v1h-1zM2 9h1v1h-1zM12 9h1v1h-1zM17 9h1v1h-1zM2 10h1v1h-1zM12 10h1v1h-1zM17 10h1v1h-1zM2 11h1v1h-1zM12 11h1v1h-1zM17 11h1v1h-1zM2 12h1v1h-1zM12 12h1v1h-1zM14 12h4v1h-4zM2 13h11v1h-11z"/><path fill="#fff" d="M1 1h9v1h-9zM11 1h1v1h-1zM1 2h1v1h-1zM11 2h1v1h-1zM1 3h1v1h-1zM11 3h1v1h-1zM16 3h1v1h-1zM18 3h1v1h-1zM1 4h1v1h-1zM11 4h1v1h-1zM15 4h2v1h-2zM18 4h1v1h-1zM1 5h1v1h-1zM18 5h1v1h-1zM1 6h1v1h-1zM11 6h1v1h-1zM13 6h1v1h-1zM18 6h1v1h-1zM1 7h1v1h-1zM11 7h1v1h-1zM13 7h1v1h-1zM18 7h1v1h-1zM11 8h1v1h-1zM13 8h1v1h-1zM18 8h1v1h-1zM1 9h1v1h-1zM3 9h9v1h-9zM13 9h1v1h-1zM18 9h1v1h-1zM3 10h1v1h-1zM13 10h1v1h-1zM18 10h1v1h-1zM3 11h1v1h-1zM13 11h1v1h-1zM18 11h1v1h-1zM3 12h1v1h-1zM13 12h1v1h-1zM18 12h1v1h-1zM13 13h1v1h-1zM15 13h4v1h-4zM3 14h11v1h-11z"/></svg>
<svg style="left:589px;top:55px" width="16" height="5" shape-rendering="crispEdges"><path fill="#000" d="M1 0h2v1h-2zM5 0h3v1h-3zM10 0h4v1h-4zM0 1h1v1h-1zM2 1h1v1h-1zM4 1h1v1h-1zM8 1h1v1h-1zM14 1h1v1h-1zM2 2h1v1h-1zM6 2h2v1h-2zM11 2h3v1h-3zM2 3h1v1h-1zM5 3h1v1h-1zM14 3h1v1h-1zM0 4h4v1h-4zM5 4h5v1h-5zM11 4h4v1h-4z"/></svg>
<svg style="left:588px;top:63px" width="17" height="3" shape-rendering="crispEdges"><path fill="#000080" d="M11 0h3v1h-3zM11 1h5v1h-5zM0 2h17v1h-17z"/></svg>
<svg style="left:621px;top:50px" width="5" height="17" shape-rendering="crispEdges"><path fill="#000" d="M2 0h1v1h-1zM1 1h2v1h-2zM2 2h1v1h-1zM2 3h1v1h-1zM1 4h3v1h-3zM0 6h1v1h-1zM3 6h1v1h-1zM0 7h2v1h-2zM4 7h1v1h-1zM0 8h1v1h-1zM2 8h1v1h-1zM4 8h1v1h-1zM0 9h1v1h-1zM2 9h1v1h-1zM4 9h1v1h-1zM0 10h1v1h-1zM3 10h1v1h-1zM0 12h1v1h-1zM4 12h1v1h-1zM0 13h1v1h-1zM2 13h1v1h-1zM4 13h1v1h-1zM0 14h1v1h-1zM2 14h1v1h-1zM4 14h1v1h-1zM0 15h1v1h-1zM2 15h1v1h-1zM4 15h1v1h-1zM1 16h1v1h-1zM3 16h1v1h-1z"/></svg>
<svg style="left:615px;top:51px" width="3" height="16" shape-rendering="crispEdges"><path fill="#000080" d="M0 0h1v1h-1zM0 1h1v1h-1zM0 2h1v1h-1zM0 3h1v1h-1zM0 4h1v1h-1zM0 5h1v1h-1zM0 6h1v1h-1zM0 7h1v1h-1zM0 8h1v1h-1zM0 9h2v1h-2zM0 10h3v1h-3zM0 11h3v1h-3zM0 12h2v1h-2zM0 13h2v1h-2zM0 14h1v1h-1zM0 15h1v1h-1z"/></svg>
<svg style="left:6px;top:4px" width="17" height="16" shape-rendering="crispEdges"><path fill="#fff" d="M1 0h1v1h-1zM1 1h1v1h-1zM4 1h1v1h-1zM6 1h1v1h-1zM8 1h1v1h-1zM3 2h1v1h-1zM5 2h1v1h-1zM7 2h1v1h-1zM9 2h1v1h-1zM1 3h2v1h-2zM4 3h1v1h-1zM6 3h1v1h-1zM8 3h1v1h-1zM10 3h1v1h-1zM12 3h1v1h-1zM1 4h1v1h-1zM3 4h1v1h-1zM5 4h1v1h-1zM9 4h1v1h-1zM11 4h1v1h-1zM13 4h1v1h-1zM15 4h1v1h-1zM4 5h1v1h-1zM10 5h1v1h-1zM12 5h1v1h-1zM14 5h1v1h-1zM16 5h1v1h-1zM1 6h1v1h-1zM7 6h1v1h-1zM9 6h1v1h-1zM11 6h1v1h-1zM13 6h1v1h-1zM0 7h1v1h-1zM4 7h1v1h-1zM6 7h1v1h-1zM10 7h1v1h-1zM12 7h1v1h-1zM14 7h1v1h-1zM16 7h1v1h-1zM1 8h1v1h-1zM3 8h1v1h-1zM5 8h1v1h-1zM7 8h1v1h-1zM9 8h1v1h-1zM11 8h1v1h-1zM13 8h1v1h-1zM0 9h1v1h-1zM2 9h1v1h-1zM4 9h1v1h-1zM6 9h1v1h-1zM10 9h1v1h-1zM12 9h1v1h-1zM1 10h1v1h-1zM3 10h1v1h-1zM5 10h1v1h-1zM7 10h1v1h-1zM9 10h1v1h-1zM11 10h1v1h-1zM2 11h1v1h-1zM4 11h1v1h-1zM6 11h1v1h-1zM8 11h1v1h-1zM10 11h1v1h-1zM3 12h1v1h-1zM5 12h1v1h-1zM7 12h1v1h-1zM9 12h1v1h-1zM13 12h1v1h-1zM4 13h1v1h-1zM6 13h1v1h-1zM8 13h1v1h-1zM12 13h1v1h-1zM5 14h1v1h-1zM7 14h1v1h-1zM9 14h1v1h-1zM11 14h1v1h-1zM6 15h1v1h-1zM8 15h1v1h-1zM10 15h1v1h-1z"/><path fill="#000" d="M3 1h1v1h-1zM3 3h1v1h-1zM7 4h1v1h-1zM6 5h1v1h-1zM3 6h1v1h-1zM5 6h1v1h-1zM8 6h1v1h-1zM15 6h2v1h-2zM2 7h1v1h-1zM8 7h1v1h-1zM15 7h1v1h-1zM14 8h2v1h-2zM8 9h1v1h-1zM13 9h2v1h-2zM13 10h1v1h-1zM11 11h2v1h-2z"/><path fill="#008000" d="M5 1h1v1h-1zM7 1h1v1h-1zM2 2h1v1h-1zM4 2h1v1h-1zM6 2h1v1h-1zM8 2h1v1h-1zM10 2h1v1h-1zM5 3h1v1h-1zM7 3h1v1h-1zM9 3h1v1h-1zM11 3h1v1h-1zM4 4h1v1h-1zM6 4h1v1h-1zM8 4h1v1h-1zM10 4h1v1h-1zM12 4h1v1h-1zM14 4h1v1h-1zM1 5h1v1h-1zM3 5h1v1h-1zM5 5h1v1h-1zM7 5h1v1h-1zM9 5h1v1h-1zM11 5h1v1h-1zM13 5h1v1h-1zM15 5h1v1h-1zM0 6h1v1h-1zM2 6h1v1h-1zM4 6h1v1h-1zM6 6h1v1h-1zM10 6h1v1h-1zM12 6h1v1h-1zM14 6h1v1h-1zM1 7h1v1h-1zM3 7h1v1h-1zM5 7h1v1h-1zM7 7h1v1h-1zM9 7h1v1h-1zM11 7h1v1h-1zM13 7h1v1h-1zM0 8h1v1h-1zM2 8h1v1h-1zM4 8h1v1h-1zM6 8h1v1h-1zM8 8h1v1h-1zM10 8h1v1h-1zM12 8h1v1h-1zM16 8h1v1h-1zM1 9h1v1h-1zM3 9h1v1h-1zM5 9h1v1h-1zM7 9h1v1h-1zM9 9h1v1h-1zM11 9h1v1h-1zM15 9h1v1h-1zM0 10h1v1h-1zM2 10h1v1h-1zM4 10h1v1h-1zM6 10h1v1h-1zM8 10h1v1h-1zM10 10h1v1h-1zM12 10h1v1h-1zM14 10h1v1h-1zM1 11h1v1h-1zM3 11h1v1h-1zM5 11h1v1h-1zM7 11h1v1h-1zM9 11h1v1h-1zM13 11h1v1h-1zM2 12h1v1h-1zM4 12h1v1h-1zM6 12h1v1h-1zM8 12h1v1h-1zM10 12h1v1h-1zM12 12h1v1h-1zM3 13h1v1h-1zM5 13h1v1h-1zM7 13h1v1h-1zM9 13h1v1h-1zM11 13h1v1h-1zM6 14h1v1h-1zM8 14h1v1h-1zM10 14h1v1h-1zM7 15h1v1h-1zM9 15h1v1h-1z"/><path fill="#00FFFF" d="M1 2h1v1h-1zM2 4h1v1h-1z"/><path fill="#0000FF" d="M2 5h1v1h-1z"/><path fill="#00FF00" d="M8 5h1v1h-1z"/><path fill="#808000" d="M11 12h1v1h-1zM10 13h1v1h-1z"/></svg>
<div style="left:4px;top:75px;width:1191px;height:1px;background:#808080;"></div>
<div style="left:4px;top:75px;width:1px;height:500px;background:#808080;"></div>
<div style="left:5px;top:76px;width:1190px;height:1px;background:#404040;"></div>
<div style="left:5px;top:76px;width:1px;height:499px;background:#404040;"></div>
<div style="left:1195px;top:75px;width:1px;height:501px;background:#fff;"></div>
<div style="left:4px;top:575px;width:1192px;height:1px;background:#fff;"></div>
<div style="left:6px;top:77px;width:1172px;height:497px;background:#008000;"></div>
<div style="left:976px;top:77px;width:15px;height:481px;background:#000;"></div>
<div style="left:224px;top:544px;width:767px;height:14px;background:#000;"></div>
<div style="left:208px;top:77px;width:768px;height:467px;background:#fff;"></div>
<svg style="left:208px;top:77px" width="769" height="467" shape-rendering="crispEdges" fill="#E6E6E6"><rect x="19" y="0" width="1" height="467"/><rect x="38" y="0" width="1" height="467"/><rect x="57" y="0" width="1" height="467"/><rect x="76" y="0" width="1" height="467"/><rect x="95" y="0" width="1" height="467"/><rect x="114" y="0" width="1" height="467"/><rect x="132" y="0" width="1" height="467"/><rect x="151" y="0" width="1" height="467"/><rect x="170" y="0" width="1" height="467"/><rect x="189" y="0" width="1" height="467"/><rect x="208" y="0" width="1" height="467"/><rect x="227" y="0" width="1" height="467"/><rect x="246" y="0" width="1" height="467"/><rect x="265" y="0" width="1" height="467"/><rect x="284" y="0" width="1" height="467"/><rect x="303" y="0" width="1" height="467"/><rect x="321" y="0" width="1" height="467"/><rect x="340" y="0" width="1" height="467"/><rect x="359" y="0" width="1" height="467"/><rect x="378" y="0" width="1" height="467"/><rect x="397" y="0" width="1" height="467"/><rect x="416" y="0" width="1" height="467"/><rect x="435" y="0" width="1" height="467"/><rect x="454" y="0" width="1" height="467"/><rect x="473" y="0" width="1" height="467"/><rect x="492" y="0" width="1" height="467"/><rect x="510" y="0" width="1" height="467"/><rect x="529" y="0" width="1" height="467"/><rect x="548" y="0" width="1" height="467"/><rect x="567" y="0" width="1" height="467"/><rect x="586" y="0" width="1" height="467"/><rect x="605" y="0" width="1" height="467"/><rect x="624" y="0" width="1" height="467"/><rect x="643" y="0" width="1" height="467"/><rect x="662" y="0" width="1" height="467"/><rect x="681" y="0" width="1" height="467"/><rect x="699" y="0" width="1" height="467"/><rect x="718" y="0" width="1" height="467"/><rect x="737" y="0" width="1" height="467"/><rect x="756" y="0" width="1" height="467"/><rect x="1" y="447" width="768" height="1"/><rect x="1" y="428" width="768" height="1"/><rect x="1" y="409" width="768" height="1"/><rect x="1" y="390" width="768" height="1"/><rect x="1" y="371" width="768" height="1"/><rect x="1" y="352" width="768" height="1"/><rect x="1" y="333" width="768" height="1"/><rect x="1" y="315" width="768" height="1"/><rect x="1" y="296" width="768" height="1"/><rect x="1" y="277" width="768" height="1"/><rect x="1" y="258" width="768" height="1"/><rect x="1" y="239" width="768" height="1"/><rect x="1" y="220" width="768" height="1"/><rect x="1" y="201" width="768" height="1"/><rect x="1" y="182" width="768" height="1"/><rect x="1" y="163" width="768" height="1"/><rect x="1" y="144" width="768" height="1"/><rect x="1" y="126" width="768" height="1"/><rect x="1" y="107" width="768" height="1"/><rect x="1" y="88" width="768" height="1"/><rect x="1" y="69" width="768" height="1"/><rect x="1" y="50" width="768" height="1"/><rect x="1" y="31" width="768" height="1"/><rect x="1" y="12" width="768" height="1"/></svg>
<div class="chk" style="left:1178px;top:77px;width:16px;height:497px;"></div>
<div class="btn" style="left:1178px;top:77px;width:16px;height:16px;border-color:#D4D0C8 #404040 #404040 #D4D0C8;"></div>
<div style="left:1179px;top:78px;width:13px;height:13px;border-left:1px solid #fff;border-top:1px solid #fff;"></div>
<svg style="left:1182px;top:83px" width="7" height="4" shape-rendering="crispEdges"><path d="M3 0h1v1h-1zM2 1h3v1h-3zM1 2h5v1h-5zM0 3h7v1h-7z"/></svg>
<div class="btn" style="left:1178px;top:196px;width:16px;height:362px;border-color:#D4D0C8 #404040 #404040 #D4D0C8;"></div>
<div style="left:1179px;top:197px;width:13px;height:359px;border-left:1px solid #fff;border-top:1px solid #fff;"></div>
<div class="btn" style="left:1178px;top:558px;width:16px;height:16px;border-color:#D4D0C8 #404040 #404040 #D4D0C8;"></div>
<div style="left:1179px;top:559px;width:13px;height:13px;border-left:1px solid #fff;border-top:1px solid #fff;"></div>
<svg style="left:1182px;top:564px" width="7" height="4" shape-rendering="crispEdges"><path d="M0 0h7v1h-7zM1 1h5v1h-5zM2 2h3v1h-3zM3 3h1v1h-1z"/></svg>
<span class="t" style="left:6px;top:577px;font-size:12px;line-height:18px;color:#000;transform:scaleX(0.8201);">Curseur</span>
<div class="sunk" style="left:47px;top:579px;width:69px;height:15px;"></div>
<span class="t" style="left:55px;top:577px;font-size:12px;line-height:18px;color:#000;transform:scaleX(0.8992);">14.0, 135.2</span>
<span class="t" style="left:122px;top:578px;font-size:11px;line-height:16px;color:#000;transform:scaleX(0.9403);">Centre de l'objet</span>
<div class="sunk" style="left:203px;top:579px;width:69px;height:15px;"></div>
<span class="t" style="left:214px;top:577px;font-size:12px;line-height:18px;color:#000;transform:scaleX(0.8805);">38.6, 33.0</span>
<span class="t" style="left:280px;top:577px;font-size:12px;line-height:18px;color:#000;transform:scaleX(0.8467);">Dimension</span>
<div class="sunk" style="left:334px;top:579px;width:69px;height:15px;"></div>
<span class="t" style="left:345px;top:577px;font-size:12px;line-height:18px;color:#000;transform:scaleX(0.8805);">69.1, 44.8</span>
<span class="t" style="left:410px;top:577px;font-size:12px;line-height:18px;color:#000;transform:scaleX(0.8797);">Angle</span>
<div class="sunk" style="left:442px;top:579px;width:30px;height:15px;"></div>
<span class="t" style="left:455px;top:577px;font-size:12px;line-height:18px;color:#000;transform:scaleX(0.7492);">0</span>
<span class="t" style="left:480px;top:577px;font-size:12px;line-height:18px;color:#000;transform:scaleX(0.8531);">Incliner</span>
<div class="sunk" style="left:518px;top:579px;width:30px;height:15px;"></div>
<span class="t" style="left:531px;top:577px;font-size:12px;line-height:18px;color:#000;transform:scaleX(0.7492);">0</span>
<div style="left:552px;top:578px;width:1px;height:19px;background:#808080;"></div>
<div style="left:553px;top:578px;width:1px;height:19px;background:#fff;"></div>
<div style="left:4px;top:598px;width:1192px;height:1px;background:#808080;"></div>
<div style="left:4px;top:599px;width:1192px;height:1px;background:#fff;"></div>
<span class="t" style="left:5px;top:602px;font-size:11px;line-height:16px;color:#000;transform:scaleX(1.0409);">Prêt</span>
<div class="sunk" style="left:1035px;top:602px;width:30px;height:16px;"></div>
<div class="sunk" style="left:1067px;top:602px;width:53px;height:16px;"></div>
<div class="sunk" style="left:1122px;top:602px;width:26px;height:16px;"></div>
<div class="sunk" style="left:1150px;top:602px;width:28px;height:16px;"></div>
<span class="t" style="left:1071px;top:602px;font-size:11px;line-height:16px;color:#000;transform:scaleX(0.9242);">100%</span>
<span class="t" style="left:1152px;top:602px;font-size:11px;line-height:16px;color:#000;transform:scaleX(0.8383);">NUM</span>
<svg style="left:1182px;top:606px" width="14" height="14" shape-rendering="crispEdges"><path d="M12 1L1 12M12 5L5 12M12 9L9 12" stroke="#808080" stroke-width="2" fill="none" shape-rendering="auto"/><path d="M12 0L0 12M12 4L4 12M12 8L8 12" stroke="#fff" stroke-width="1" fill="none" shape-rendering="auto"/></svg>
<svg style="left:210px;top:320px" width="290" height="195" viewBox="210 320 290 195" shape-rendering="crispEdges"><rect x="223" y="334" width="131" height="6" fill="#0000FF"/><rect x="354" y="333" width="131" height="7" fill="#0000FF"/><rect x="223" y="334" width="6" height="85" fill="#0000FF"/><rect x="224" y="419" width="6" height="85" fill="#0000FF"/><rect x="223" y="497" width="52" height="7" fill="#0000FF"/><rect x="273" y="497" width="212" height="7" fill="#0000FF"/><rect x="479" y="333" width="6" height="171" fill="#0000FF"/><polygon points="388,334 485,334 485,367 458,367 446,355 388,355" fill="#0000FF"/><polygon points="395,484.4 452,484.4 454,478 460,471.5 468,469.5 485,469.5 485,504 395,504" fill="#0000FF"/><polyline points="391.5,499 391.5,482 451,482 455,474 462,469 470,468 480.5,468.5" fill="none" stroke="#0000FF" stroke-width="1" stroke-linecap="butt" stroke-linejoin="miter"/><rect x="254" y="338" width="36" height="1" fill="#FFFFFF"/><rect x="341" y="338" width="47" height="1" fill="#FFFFFF"/><rect x="387" y="338" width="1" height="17" fill="#FFFFFF"/><rect x="386" y="340" width="1" height="16" fill="#0000FF"/><rect x="386" y="355" width="3" height="1" fill="#0000FF"/><rect x="224" y="358" width="1" height="61" fill="#FFFFFF"/><rect x="228" y="419" width="1" height="54" fill="#FFFFFF"/><rect x="480" y="367" width="1" height="102" fill="#FFFFFF"/><rect x="252" y="499" width="21" height="1" fill="#FFFFFF"/><rect x="273" y="498" width="119" height="1" fill="#FFFFFF"/><rect x="310" y="499" width="82" height="1" fill="#FFFFFF"/><rect x="340" y="500" width="52" height="1" fill="#FFFFFF"/><rect x="273" y="503" width="97" height="1" fill="#FFFFFF"/><polyline points="446.5,355.5 458,367.5 479,367.5" fill="none" stroke="#FFFFFF" stroke-width="1" stroke-linecap="butt" stroke-linejoin="miter"/><circle cx="242.7" cy="351.8" r="15.6" fill="#0000FF"/><path d="M242.7 351.8L229.10 351.80A13.6 13.6 0 0 1 242.70 338.20Z" fill="#FFFFFF"/><path d="M242.7 351.8L256.30 351.80A13.6 13.6 0 0 1 242.70 365.40Z" fill="#FFFFFF"/><circle cx="242.7" cy="351.8" r="2.6" fill="#0000FF"/><path d="M244.7 339.3A12.5 12.5 0 0 1 255.2 349.8" fill="none" stroke="#fff" stroke-width="1" stroke-dasharray="2 1"/><path d="M240.7 364.3A12.5 12.5 0 0 1 230.2 353.8" fill="none" stroke="#fff" stroke-width="1" stroke-dasharray="1 2"/><path fill="#FFFFFF" d="M247 344h1v1h-1zM249 344h1v1h-1zM246 345h1v1h-1zM248 345h1v1h-1zM247 346h1v1h-1zM249 346h1v1h-1zM246 347h1v1h-1zM248 347h1v1h-1zM247 348h1v1h-1zM246 349h1v1h-1z"/><path fill="#FFFFFF" d="M233 355h1v1h-1zM235 356h1v1h-1zM232 358h1v1h-1zM236 359h1v1h-1zM234 360h1v1h-1zM238 361h1v1h-1zM236 362h1v1h-1zM233 361h1v1h-1zM239 357h1v1h-1zM237 358h1v1h-1zM231 356h1v1h-1zM235 363h1v1h-1z"/><circle cx="241.3" cy="485.8" r="15.6" fill="#0000FF"/><path d="M241.3 485.8L227.70 485.80A13.6 13.6 0 0 1 241.30 472.20Z" fill="#FFFFFF"/><path d="M241.3 485.8L254.90 485.80A13.6 13.6 0 0 1 241.30 499.40Z" fill="#FFFFFF"/><circle cx="241.3" cy="485.8" r="2.6" fill="#0000FF"/><path d="M243.3 473.3A12.5 12.5 0 0 1 253.8 483.8" fill="none" stroke="#fff" stroke-width="1" stroke-dasharray="2 1"/><path d="M239.3 498.3A12.5 12.5 0 0 1 228.8 487.8" fill="none" stroke="#fff" stroke-width="1" stroke-dasharray="1 2"/><path fill="#FFFFFF" d="M246 478h1v1h-1zM248 478h1v1h-1zM245 479h1v1h-1zM247 479h1v1h-1zM246 480h1v1h-1zM248 480h1v1h-1zM245 481h1v1h-1zM247 481h1v1h-1zM246 482h1v1h-1zM245 483h1v1h-1z"/><path fill="#FFFFFF" d="M232 489h1v1h-1zM234 490h1v1h-1zM231 492h1v1h-1zM235 493h1v1h-1zM233 494h1v1h-1zM237 495h1v1h-1zM235 496h1v1h-1zM232 495h1v1h-1zM238 491h1v1h-1zM236 492h1v1h-1zM230 490h1v1h-1zM234 497h1v1h-1z"/><circle cx="467.3" cy="350.8" r="15" fill="#0000FF"/><path d="M467.3 350.8L454.80 350.80A12.5 12.5 0 0 1 467.30 338.30Z" fill="#FFFFFF"/><path d="M467.3 350.8L479.80 350.80A12.5 12.5 0 0 1 467.30 363.30Z" fill="#FFFFFF"/><circle cx="467.3" cy="350.8" r="2.6" fill="#0000FF"/><path fill="#FFFFFF" d="M472 343h1v1h-1zM471 344h1v1h-1zM473 344h1v1h-1zM472 345h1v1h-1zM474 345h1v1h-1zM471 346h1v1h-1zM473 346h1v1h-1zM472 347h1v1h-1zM471 348h1v1h-1z"/><path fill="#FFFFFF" d="M458 354h1v1h-1zM460 355h1v1h-1zM457 357h1v1h-1zM461 358h1v1h-1zM459 359h1v1h-1zM463 360h1v1h-1zM461 361h1v1h-1zM458 360h1v1h-1zM464 356h1v1h-1zM462 357h1v1h-1zM456 355h1v1h-1zM460 362h1v1h-1z"/><circle cx="467.3" cy="485.8" r="15" fill="#0000FF"/><path d="M467.3 485.8L454.80 485.80A12.5 12.5 0 0 1 467.30 473.30Z" fill="#FFFFFF"/><path d="M467.3 485.8L479.80 485.80A12.5 12.5 0 0 1 467.30 498.30Z" fill="#FFFFFF"/><circle cx="467.3" cy="485.8" r="2.6" fill="#0000FF"/><path fill="#FFFFFF" d="M472 478h1v1h-1zM471 479h1v1h-1zM473 479h1v1h-1zM472 480h1v1h-1zM474 480h1v1h-1zM471 481h1v1h-1zM473 481h1v1h-1zM472 482h1v1h-1zM471 483h1v1h-1z"/><path fill="#FFFFFF" d="M458 489h1v1h-1zM460 490h1v1h-1zM457 492h1v1h-1zM461 493h1v1h-1zM459 494h1v1h-1zM463 495h1v1h-1zM461 496h1v1h-1zM458 495h1v1h-1zM464 491h1v1h-1zM462 492h1v1h-1zM456 490h1v1h-1zM460 497h1v1h-1z"/><polygon points="286.3,351 293,340 296,339 300.5,345 300.5,357 295,361.5 287,356" fill="#0000FF"/><rect x="294" y="337" width="1" height="4" fill="#0000FF"/><polyline points="297,351.7 310,351.7" fill="none" stroke="#0000FF" stroke-width="9.5" stroke-linecap="butt" stroke-linejoin="round"/><circle cx="310.5" cy="351.5" r="7.5" fill="#0000FF"/><polygon points="288.3,351 293.6,342.3 296,341.5 298.5,345.5 298.5,356.3 294.5,359.3 289,355.3" fill="none" stroke="#fff" stroke-width="1"/><rect x="291.6" y="346" width="5" height="10.2" fill="#FFFFFF"/><rect x="293" y="349.6" width="2" height="2.4" fill="#0000FF"/><polyline points="297,351.5 306,351.5" fill="none" stroke="#FFFFFF" stroke-width="1" stroke-linecap="butt" stroke-linejoin="round"/><circle cx="310.5" cy="351.5" r="2.6" fill="none" stroke="#FFFFFF" stroke-width="1.2"/><rect x="281" y="346" width="1" height="3" fill="#0000FF"/><rect x="283" y="350" width="3" height="1" fill="#0000FF"/><polygon points="286.8,486 291,478.5 298,477.6 300.5,481 300.5,492 296,495.5 288,492" fill="#0000FF"/><polyline points="297,486.3 310,486.3" fill="none" stroke="#0000FF" stroke-width="9.5" stroke-linecap="butt" stroke-linejoin="round"/><circle cx="310.5" cy="486.5" r="7.5" fill="#0000FF"/><polygon points="288.8,486 292,480.5 297.5,479.6 298.5,481.5 298.5,491.5 295.5,493.5 289.5,491" fill="none" stroke="#fff" stroke-width="1"/><rect x="292" y="481" width="4.6" height="9.8" fill="#FFFFFF"/><rect x="293" y="484.6" width="2.4" height="2.4" fill="#0000FF"/><polyline points="297,486.3 306,486.3" fill="none" stroke="#FFFFFF" stroke-width="1" stroke-linecap="butt" stroke-linejoin="round"/><circle cx="310.5" cy="486.5" r="2.6" fill="none" stroke="#FFFFFF" stroke-width="1.2"/><rect x="283.4" y="485.3" width="2.6" height="1.5" fill="#0000FF"/><polyline points="290,493.5 293.5,498 297,495.5 300.5,491.5 310,492.5" fill="none" stroke="#FFFFFF" stroke-width="1" stroke-linecap="butt" stroke-linejoin="miter"/><polygon points="237,386 238.5,382.5 241,381 283,381 293,373 360,373 360,386.7 297,386.7 287,396.9 241,396.9 238,395 237,391" fill="#0000FF"/><circle cx="246.3" cy="380.2" r="2.2" fill="#0000FF"/><circle cx="252.5" cy="380.2" r="1.6" fill="#0000FF"/><circle cx="258.7" cy="380.2" r="1.6" fill="#0000FF"/><circle cx="265.6" cy="380.2" r="3" fill="#0000FF"/><circle cx="272.3" cy="380.2" r="1.6" fill="#0000FF"/><rect x="260.5" y="375" width="3.5" height="1.3" fill="#0000FF"/><rect x="267" y="375.3" width="4.5" height="1.5" fill="#0000FF"/><polyline points="346.5,351 337.5,351 328.8,360 328.8,377" fill="none" stroke="#0000FF" stroke-width="13.5" stroke-linecap="butt" stroke-linejoin="miter"/><circle cx="346.5" cy="351" r="8.2" fill="#0000FF"/><rect x="335" y="363.4" width="72" height="5.4" fill="#0000FF"/><polygon points="400,363.4 407,363.4 421,377 422.5,403 400,404" fill="#0000FF"/><rect x="362" y="372.6" width="59" height="31.4" fill="#0000FF"/><rect x="385.5" y="403" width="92" height="51" fill="#0000FF"/><polygon points="385.5,450 426,450 426,454 408,471.5 394.2,471.5 385.5,462" fill="#0000FF"/><polygon points="357.5,372.6 386,372.6 386,443 377.8,440.3 373,436.5 374,431 357.5,414.5" fill="#0000FF"/><rect x="346.3" y="386" width="11.2" height="46.6" fill="#0000FF"/><rect x="353" y="372.6" width="10" height="41.4" fill="#0000FF"/><polygon points="346.3,432.6 357.5,432.6 357.5,435 342.9,450 369,450 369,452 330.8,452 330.8,444.2" fill="#0000FF"/><polyline points="469.3,389 469.3,408" fill="none" stroke="#0000FF" stroke-width="15" stroke-linecap="round" stroke-linejoin="round"/><polyline points="470,430 470,448" fill="none" stroke="#0000FF" stroke-width="15" stroke-linecap="round" stroke-linejoin="round"/><rect x="465.8" y="378" width="3.2" height="3.2" fill="#0000FF"/><rect x="466.8" y="379" width="1.2" height="1.2" fill="#FFFFFF"/><rect x="466" y="455.8" width="3" height="1.9" fill="#0000FF"/><polygon points="471.6,418 478,411.5 478,424" fill="#FFFFFF"/><polyline points="352,398.8 302,398.8 297.5,403.5 297.5,410" fill="none" stroke="#0000FF" stroke-width="12" stroke-linecap="butt" stroke-linejoin="round"/><polyline points="244.5,414 256,414" fill="none" stroke="#0000FF" stroke-width="15" stroke-linecap="round" stroke-linejoin="round"/><polyline points="266.5,406.3 273,406.3" fill="none" stroke="#0000FF" stroke-width="14.6" stroke-linecap="round" stroke-linejoin="round"/><polyline points="266.5,418.5 275,418.5" fill="none" stroke="#0000FF" stroke-width="13" stroke-linecap="round" stroke-linejoin="round"/><polyline points="267.5,430.6 273.5,430.6" fill="none" stroke="#0000FF" stroke-width="12" stroke-linecap="round" stroke-linejoin="round"/><rect x="262" y="404" width="16.5" height="27" fill="#0000FF"/><polyline points="277,406.5 285.5,414.7 299,414.7" fill="none" stroke="#0000FF" stroke-width="14" stroke-linecap="round" stroke-linejoin="round"/><polyline points="256,414 264,418" fill="none" stroke="#0000FF" stroke-width="12" stroke-linecap="butt" stroke-linejoin="round"/><circle cx="246.3" cy="423" r="2" fill="#0000FF"/><rect x="241" y="425.3" width="4.5" height="1" fill="#0000FF"/><rect x="249" y="424.8" width="4" height="1" fill="#0000FF"/><rect x="298" y="421.8" width="2" height="3.2" fill="#0000FF"/><polyline points="318.5,438 318.5,428.5 331.5,415 340,415" fill="none" stroke="#0000FF" stroke-width="14" stroke-linecap="round" stroke-linejoin="round"/><polygon points="331.3,409.4 343,409.4 345.8,413 345.8,424 342,426.8 333,426.8 331.3,424" fill="#0000FF"/><polyline points="244,447 285,447 295,457 362,457" fill="none" stroke="#0000FF" stroke-width="14" stroke-linecap="round" stroke-linejoin="miter"/><circle cx="246" cy="457.2" r="2.2" fill="#0000FF"/><circle cx="265.5" cy="457.2" r="2.7" fill="#0000FF"/><rect x="240" y="459.7" width="3" height="1" fill="#0000FF"/><rect x="249" y="459.7" width="3" height="1" fill="#0000FF"/><rect x="260" y="459.7" width="3" height="1" fill="#0000FF"/><rect x="269.5" y="459.7" width="2.5" height="1" fill="#0000FF"/><polyline points="328.4,457 328.4,476 338.5,486.2 347.5,486.2" fill="none" stroke="#0000FF" stroke-width="12" stroke-linecap="butt" stroke-linejoin="miter"/><circle cx="347.5" cy="486.2" r="7.3" fill="#0000FF"/><rect x="239.5" y="386.4" width="12" height="4.8" rx="2.2" fill="#fff"/><rect x="244" y="387.9" width="4" height="2.6" fill="#0000FF"/><polyline points="251,389.2 284,389.2" fill="none" stroke="#FFFFFF" stroke-width="2.6" stroke-linecap="butt" stroke-linejoin="round"/><polyline points="282,388.5 291,379.5" fill="none" stroke="#FFFFFF" stroke-width="1" stroke-linecap="butt" stroke-linejoin="round"/><polyline points="285.5,391 296,380.5" fill="none" stroke="#FFFFFF" stroke-width="1" stroke-linecap="butt" stroke-linejoin="round"/><polyline points="284,385 290,379" fill="none" stroke="#FFFFFF" stroke-width="1" stroke-linecap="butt" stroke-linejoin="round"/><polyline points="294,379.8 353.6,379.8" fill="none" stroke="#FFFFFF" stroke-width="3.2" stroke-linecap="butt" stroke-linejoin="round"/><rect x="302" y="378" width="4" height="4" fill="#0000FF"/><circle cx="328" cy="380" r="3.6" fill="#FFFFFF"/><circle cx="328" cy="380" r="2.3" fill="#0000FF"/><rect x="334.8" y="377.4" width="5.2" height="5.2" fill="#FFFFFF"/><rect x="349" y="377.4" width="5.2" height="5.2" fill="#FFFFFF"/><rect x="335.8" y="378.4" width="3.2" height="3.2" fill="#0000FF"/><rect x="350" y="378.4" width="3.2" height="3.2" fill="#0000FF"/><circle cx="265.4" cy="379.8" r="1.8" fill="none" stroke="#FFFFFF" stroke-width="1"/><polyline points="344,351 337.5,351 328.2,360.3 328.2,377" fill="none" stroke="#FFFFFF" stroke-width="1.5" stroke-linecap="butt" stroke-linejoin="miter"/><circle cx="346.5" cy="351" r="2.5" fill="none" stroke="#FFFFFF" stroke-width="1.2"/><polyline points="324.5,358.5 334,348.5" fill="none" stroke="#FFFFFF" stroke-width="1" stroke-linecap="butt" stroke-linejoin="round"/><polyline points="331.5,362 338,355.5" fill="none" stroke="#FFFFFF" stroke-width="1" stroke-linecap="butt" stroke-linejoin="round"/><polyline points="339,370.4 402,370.4 414.5,383 414.5,397" fill="none" stroke="#FFFFFF" stroke-width="2.4" stroke-linecap="butt" stroke-linejoin="miter"/><rect x="334.9" y="368" width="4.6" height="4.6" fill="#FFFFFF"/><rect x="336.3" y="369.4" width="1.8" height="1.8" fill="#0000FF"/><polyline points="361.2,372.6 361.2,389.3 352,398.5 352,432.5 339.5,446" fill="none" stroke="#FFFFFF" stroke-width="2.2" stroke-linecap="butt" stroke-linejoin="miter"/><polyline points="380.7,406 381,399 378,394.7 370,393.3 364,394.6 361.3,397 361.3,410 380.7,430.3 380.7,434.6" fill="none" stroke="#FFFFFF" stroke-width="2" stroke-linecap="butt" stroke-linejoin="round"/><polyline points="355.8,416.6 355.8,424" fill="none" stroke="#FFFFFF" stroke-width="1.5" stroke-linecap="butt" stroke-linejoin="round"/><polygon points="370,430.5 372.3,432.6 370,434.8 367.7,432.6" fill="#0000FF"/><rect x="335.3" y="445.5" width="4.2" height="4.2" fill="#FFFFFF"/><rect x="336.5" y="446.7" width="1.8" height="1.8" fill="#0000FF"/><polyline points="350,391.5 357,384.5" fill="none" stroke="#FFFFFF" stroke-width="1" stroke-linecap="butt" stroke-linejoin="round"/><polyline points="354,396 362.5,387.5" fill="none" stroke="#FFFFFF" stroke-width="1" stroke-linecap="butt" stroke-linejoin="round"/><rect x="370" y="398.7" width="3" height="3.9" fill="#FFFFFF"/><rect x="379.2" y="401.6" width="3" height="6.8" fill="#FFFFFF"/><polyline points="368,409.4 390.3,431.6" fill="none" stroke="#FFFFFF" stroke-width="1" stroke-linecap="butt" stroke-linejoin="round"/><polyline points="376.5,407.5 397,428.5" fill="none" stroke="#FFFFFF" stroke-width="1" stroke-linecap="butt" stroke-linejoin="round"/><polyline points="378.5,407 399,428" fill="none" stroke="#FFFFFF" stroke-width="1" stroke-linecap="butt" stroke-linejoin="round"/><rect x="388.4" y="377.1" width="4.8" height="4.8" fill="#FFFFFF"/><rect x="389.8" y="378.5" width="2" height="2" fill="#0000FF"/><polyline points="391.4,382 391.4,402" fill="none" stroke="#FFFFFF" stroke-width="2.2" stroke-linecap="butt" stroke-linejoin="round"/><rect x="389.4" y="402.9" width="3.2" height="3.2" fill="#FFFFFF"/><rect x="390.4" y="403.9" width="1.2" height="1.2" fill="#0000FF"/><polyline points="414.5,398 410,403.3 402,404.5 398.7,401.4" fill="none" stroke="#FFFFFF" stroke-width="1.8" stroke-linecap="butt" stroke-linejoin="round"/><circle cx="414.4" cy="398.8" r="3.8" fill="#FFFFFF"/><circle cx="414.4" cy="398.8" r="2.2" fill="#0000FF"/><polyline points="463,408.4 421,408.4 417,412.8 385,412.8 381.5,409" fill="none" stroke="#FFFFFF" stroke-width="2.2" stroke-linecap="butt" stroke-linejoin="miter"/><rect x="464.5" y="405.4" width="6" height="6" fill="#FFFFFF"/><rect x="466.3" y="407.2" width="2.4" height="2.4" fill="#0000FF"/><polyline points="468,390 468,405.4" fill="none" stroke="#FFFFFF" stroke-width="2.4" stroke-linecap="butt" stroke-linejoin="round"/><rect x="463.7" y="423.6" width="7.2" height="7.2" fill="#FFFFFF"/><rect x="465.8" y="425.7" width="3" height="3" fill="#0000FF"/><polyline points="467.3,430.7 467.3,445.4" fill="none" stroke="#FFFFFF" stroke-width="2.8" stroke-linecap="butt" stroke-linejoin="round"/><rect x="465.5" y="445.4" width="4" height="3" fill="#FFFFFF"/><rect x="466.4" y="446.2" width="2.2" height="1.4" fill="#0000FF"/><polyline points="389.8,428 389.8,462.5 394.5,467 406.5,467 424.5,448 466,447.7" fill="none" stroke="#FFFFFF" stroke-width="1.6" stroke-linecap="butt" stroke-linejoin="miter"/><polyline points="400,431 400,454" fill="none" stroke="#FFFFFF" stroke-width="1.6" stroke-linecap="butt" stroke-linejoin="round"/><circle cx="400" cy="430" r="1.8" fill="#FFFFFF"/><circle cx="400" cy="456.8" r="3.2" fill="#FFFFFF"/><circle cx="400" cy="456.8" r="1.8" fill="#0000FF"/><polyline points="421,446 407,460" fill="none" stroke="#FFFFFF" stroke-width="1" stroke-linecap="butt" stroke-linejoin="round"/><polyline points="423,452.5 410,465.5" fill="none" stroke="#FFFFFF" stroke-width="1" stroke-linecap="butt" stroke-linejoin="round"/><circle cx="428.6" cy="418.6" r="3.6" fill="#FFFFFF"/><circle cx="428.6" cy="418.6" r="1.8" fill="#0000FF"/><polyline points="426,416.5 416.5,420 414.3,424 414.3,435.5" fill="none" stroke="#FFFFFF" stroke-width="1.9" stroke-linecap="butt" stroke-linejoin="round"/><circle cx="414.2" cy="437.8" r="3" fill="#FFFFFF"/><circle cx="414.2" cy="437.8" r="1.7" fill="#0000FF"/><polyline points="436,435 442.5,428.5" fill="none" stroke="#FFFFFF" stroke-width="1" stroke-linecap="butt" stroke-linejoin="round"/><polyline points="440,428 443,431" fill="none" stroke="#FFFFFF" stroke-width="1" stroke-linecap="butt" stroke-linejoin="round"/><polyline points="302.5,398.8 336,398.8" fill="none" stroke="#FFFFFF" stroke-width="2.9" stroke-linecap="butt" stroke-linejoin="round"/><polyline points="336,399.7 351.5,399.7" fill="none" stroke="#FFFFFF" stroke-width="1.4" stroke-linecap="butt" stroke-linejoin="round"/><polyline points="303,399 298.8,403.5 298.8,411.5" fill="none" stroke="#FFFFFF" stroke-width="1.5" stroke-linecap="butt" stroke-linejoin="miter"/><circle cx="318.3" cy="399.1" r="3.4" fill="#FFFFFF"/><rect x="316.9" y="397.7" width="2.8" height="2.8" fill="#0000FF"/><rect x="296.9" y="411.5" width="4" height="4" fill="#FFFFFF"/><rect x="298.1" y="412.7" width="1.6" height="1.6" fill="#0000FF"/><rect x="240.5" y="410.8" width="10.5" height="5.8" rx="2.6" fill="#fff"/><rect x="244.4" y="412.2" width="3.6" height="2.8" fill="#0000FF"/><polyline points="250.8,414.7 256,414.7 262.4,419.8 267.6,419.8" fill="none" stroke="#FFFFFF" stroke-width="1.4" stroke-linecap="butt" stroke-linejoin="miter"/><rect x="267.6" y="416" width="8.6" height="4.8" rx="2" fill="#fff"/><rect x="269.5" y="417.3" width="1.7" height="2.5" fill="#0000FF"/><rect x="273" y="417.3" width="1.4" height="2.5" fill="#0000FF"/><polyline points="250.8,412.3 258,410 264,406.3" fill="none" stroke="#FFFFFF" stroke-width="1.3" stroke-linecap="butt" stroke-linejoin="round"/><rect x="264.4" y="403" width="6" height="6" rx="2" fill="#fff"/><rect x="266.3" y="404.4" width="1.9" height="3.8" fill="#0000FF"/><polyline points="270.4,405.2 276.6,405.2 285.8,414 297,413.6" fill="none" stroke="#FFFFFF" stroke-width="2.2" stroke-linecap="butt" stroke-linejoin="miter"/><rect x="263.7" y="427" width="13" height="6.4" rx="3" fill="#fff"/><polygon points="270,428 272.3,430.2 270,432.4 267.7,430.2" fill="#0000FF"/><rect x="316.3" y="435.9" width="4.2" height="4.2" fill="#FFFFFF"/><rect x="317.5" y="437.1" width="1.8" height="1.8" fill="#0000FF"/><polyline points="320.6,435.5 320.6,429 329.5,420.5" fill="none" stroke="#FFFFFF" stroke-width="2.2" stroke-linecap="butt" stroke-linejoin="miter"/><polyline points="321.6,419 330.3,410.5" fill="none" stroke="#FFFFFF" stroke-width="1" stroke-linecap="butt" stroke-linejoin="round"/><polyline points="320,417.5 328.5,409" fill="none" stroke="#FFFFFF" stroke-width="1" stroke-linecap="butt" stroke-linejoin="round"/><rect x="336" y="415.6" width="2" height="5.4" fill="#FFFFFF"/><rect x="332" y="417" width="2.4" height="3" fill="#0000FF"/><rect x="340.9" y="416.9" width="3.2" height="3.2" fill="#FFFFFF"/><rect x="341.9" y="417.9" width="1.2" height="1.2" fill="#0000FF"/><rect x="239.8" y="445" width="12.4" height="4.6" rx="2.2" fill="#fff"/><rect x="245" y="446" width="3" height="2" fill="#0000FF"/><polyline points="252,446.6 285,446.6" fill="none" stroke="#FFFFFF" stroke-width="1.4" stroke-linecap="butt" stroke-linejoin="round"/><polyline points="285,446 296,457" fill="none" stroke="#FFFFFF" stroke-width="1" stroke-linecap="butt" stroke-linejoin="round"/><polyline points="287.5,445 298.5,456" fill="none" stroke="#FFFFFF" stroke-width="1" stroke-linecap="butt" stroke-linejoin="round"/><polyline points="296,458.6 326,458.6" fill="none" stroke="#FFFFFF" stroke-width="1.8" stroke-linecap="butt" stroke-linejoin="round"/><rect x="302.3" y="455.3" width="3.4" height="3.4" fill="#0000FF"/><circle cx="327.9" cy="456.8" r="2.8" fill="#FFFFFF"/><circle cx="327.9" cy="456.8" r="1.7" fill="#0000FF"/><rect x="335.4" y="455" width="4.4" height="4.4" fill="#FFFFFF"/><rect x="336.7" y="456.3" width="1.8" height="1.8" fill="#0000FF"/><rect x="359.4" y="454.8" width="4.4" height="4.4" fill="#FFFFFF"/><rect x="360.7" y="456.1" width="1.8" height="1.8" fill="#0000FF"/><rect x="339.8" y="455.8" width="19.6" height="2.8" fill="#FFFFFF"/><circle cx="265.5" cy="457.2" r="1.7" fill="none" stroke="#FFFFFF" stroke-width="1"/><polyline points="328.3,459.7 328.3,477 337.8,486.3 345.3,486.3" fill="none" stroke="#FFFFFF" stroke-width="1.9" stroke-linecap="butt" stroke-linejoin="miter"/><rect x="345.2" y="483.5" width="4.6" height="4.6" fill="#FFFFFF"/><rect x="346.5" y="484.8" width="2" height="2" fill="#0000FF"/><path fill="#FFFFFF" d="M412 343h1v1h-1zM417 351h1v1h-1zM395 342h1v1h-1zM444 349h1v1h-1zM398 346h1v1h-1zM429 341h1v1h-1zM424 344h1v1h-1zM394 342h1v1h-1zM419 347h1v1h-1zM396 344h1v1h-1zM397 349h1v1h-1zM419 341h1v1h-1zM444 350h1v1h-1zM399 344h1v1h-1zM432 351h1v1h-1zM429 341h1v1h-1zM428 350h1v1h-1zM417 341h1v1h-1zM406 341h1v1h-1zM427 343h1v1h-1zM410 347h1v1h-1zM401 349h1v1h-1zM399 350h1v1h-1zM411 349h1v1h-1zM444 351h1v1h-1zM403 342h1v1h-1zM429 350h1v1h-1zM432 344h1v1h-1zM415 342h1v1h-1zM427 352h1v1h-1zM396 350h1v1h-1zM395 350h1v1h-1zM405 348h1v1h-1zM435 349h1v1h-1zM419 346h1v1h-1zM421 350h1v1h-1zM421 346h1v1h-1zM411 344h1v1h-1zM442 343h1v1h-1zM436 344h1v1h-1zM397 350h1v1h-1zM411 349h1v1h-1zM423 346h1v1h-1zM438 348h1v1h-1zM410 350h1v1h-1zM396 342h1v1h-1zM424 347h1v1h-1zM402 346h1v1h-1zM401 348h1v1h-1zM418 341h1v1h-1zM434 342h1v1h-1zM440 349h1v1h-1zM428 346h1v1h-1zM413 352h1v1h-1zM414 350h1v1h-1zM423 350h1v1h-1zM443 348h1v1h-1zM396 342h1v1h-1zM409 348h1v1h-1zM436 351h1v1h-1zM396 341h1v1h-1zM438 352h1v1h-1zM411 351h1v1h-1zM428 351h1v1h-1zM444 348h1v1h-1zM410 352h1v1h-1zM416 351h1v1h-1zM414 341h1v1h-1zM421 346h1v1h-1zM402 350h1v1h-1z"/><path fill="#FFFFFF" d="M407 494h1v1h-1zM403 490h1v1h-1zM449 491h1v1h-1zM408 498h1v1h-1zM415 493h1v1h-1zM425 494h1v1h-1zM405 489h1v1h-1zM428 493h1v1h-1zM435 491h1v1h-1zM456 489h1v1h-1zM452 493h1v1h-1zM455 495h1v1h-1zM417 498h1v1h-1zM426 492h1v1h-1zM443 493h1v1h-1zM461 490h1v1h-1zM409 488h1v1h-1zM411 489h1v1h-1zM414 497h1v1h-1zM414 487h1v1h-1zM431 496h1v1h-1zM411 491h1v1h-1zM418 487h1v1h-1zM409 493h1v1h-1zM434 492h1v1h-1zM439 496h1v1h-1zM420 489h1v1h-1zM444 495h1v1h-1zM460 496h1v1h-1zM441 497h1v1h-1zM447 487h1v1h-1zM429 497h1v1h-1zM451 495h1v1h-1zM425 493h1v1h-1zM425 493h1v1h-1zM406 494h1v1h-1zM440 493h1v1h-1zM403 490h1v1h-1zM404 490h1v1h-1zM428 489h1v1h-1zM407 492h1v1h-1zM438 487h1v1h-1zM406 487h1v1h-1zM436 489h1v1h-1zM434 488h1v1h-1zM460 492h1v1h-1zM439 487h1v1h-1zM404 490h1v1h-1zM439 493h1v1h-1zM409 497h1v1h-1zM416 492h1v1h-1zM438 492h1v1h-1zM430 488h1v1h-1zM407 494h1v1h-1zM462 494h1v1h-1zM430 494h1v1h-1zM419 488h1v1h-1zM409 488h1v1h-1zM447 492h1v1h-1zM447 491h1v1h-1zM430 498h1v1h-1zM410 495h1v1h-1zM401 490h1v1h-1zM460 495h1v1h-1zM423 489h1v1h-1zM444 495h1v1h-1zM458 487h1v1h-1zM448 495h1v1h-1zM419 497h1v1h-1zM455 488h1v1h-1zM444 491h1v1h-1zM433 492h1v1h-1zM458 489h1v1h-1zM422 490h1v1h-1zM434 495h1v1h-1zM449 495h1v1h-1zM421 497h1v1h-1zM414 496h1v1h-1zM451 490h1v1h-1zM451 490h1v1h-1zM452 493h1v1h-1zM447 490h1v1h-1zM412 495h1v1h-1zM431 492h1v1h-1zM446 487h1v1h-1zM401 491h1v1h-1zM430 491h1v1h-1zM412 498h1v1h-1zM438 492h1v1h-1zM428 498h1v1h-1z"/><rect x="442.5" y="487" width="1.5" height="8" fill="#FFFFFF"/><polygon points="438,492 443,486.5 443,492" fill="#FFFFFF"/><rect x="400" y="500" width="25" height="1" fill="#FFFFFF"/><path fill="#FFFFFF" d="M432 428h1v1h-1zM398 419h1v1h-1zM401 419h1v1h-1zM448 417h1v1h-1zM431 418h1v1h-1zM449 444h1v1h-1zM466 405h1v1h-1zM449 446h1v1h-1zM432 446h1v1h-1zM398 412h1v1h-1zM437 417h1v1h-1zM449 416h1v1h-1zM443 445h1v1h-1zM430 410h1v1h-1zM438 434h1v1h-1zM439 410h1v1h-1zM408 415h1v1h-1zM404 406h1v1h-1zM407 442h1v1h-1zM447 446h1v1h-1zM406 444h1v1h-1zM464 435h1v1h-1zM472 427h1v1h-1zM407 440h1v1h-1zM458 413h1v1h-1zM390 405h1v1h-1zM471 411h1v1h-1zM455 413h1v1h-1zM443 417h1v1h-1zM415 406h1v1h-1zM420 418h1v1h-1zM425 437h1v1h-1zM418 442h1v1h-1zM429 421h1v1h-1zM457 431h1v1h-1zM404 408h1v1h-1zM433 434h1v1h-1zM472 442h1v1h-1zM454 431h1v1h-1zM452 413h1v1h-1zM456 414h1v1h-1zM455 437h1v1h-1zM390 433h1v1h-1zM411 443h1v1h-1zM388 414h1v1h-1zM410 414h1v1h-1zM448 444h1v1h-1zM403 440h1v1h-1zM395 425h1v1h-1zM475 438h1v1h-1zM455 440h1v1h-1zM449 411h1v1h-1zM459 408h1v1h-1zM419 417h1v1h-1zM423 407h1v1h-1zM400 437h1v1h-1zM445 440h1v1h-1zM391 409h1v1h-1zM444 425h1v1h-1zM466 437h1v1h-1zM402 390h1v1h-1zM376 396h1v1h-1zM381 388h1v1h-1zM396 391h1v1h-1zM415 389h1v1h-1zM396 381h1v1h-1zM408 390h1v1h-1zM380 391h1v1h-1zM376 400h1v1h-1zM392 378h1v1h-1zM390 377h1v1h-1zM389 388h1v1h-1zM384 376h1v1h-1zM406 381h1v1h-1zM391 376h1v1h-1zM377 395h1v1h-1zM383 399h1v1h-1zM371 402h1v1h-1zM413 378h1v1h-1zM409 394h1v1h-1z"/><rect x="219" y="329" width="9" height="9" fill="#000"/><rect x="223" y="334" width="5" height="4" fill="#FFFF00"/><rect x="481" y="329" width="9" height="9" fill="#000"/><rect x="481" y="333" width="4" height="5" fill="#FFFF00"/><rect x="219" y="499" width="9" height="9" fill="#000"/><rect x="223" y="499" width="5" height="5" fill="#FFFF00"/><rect x="481" y="499" width="9" height="9" fill="#000"/><rect x="481" y="499" width="4" height="5" fill="#FFFF00"/><path fill="#000" d="M351 333h1v1h-1zM352 333h1v1h-1zM353 333h1v1h-1zM352 332h1v1h-1zM353 332h1v1h-1zM354 332h1v1h-1zM355 332h1v1h-1zM356 332h1v1h-1zM352 331h1v1h-1zM353 331h1v1h-1zM354 331h1v1h-1zM355 331h1v1h-1zM356 331h1v1h-1zM352 330h1v1h-1zM353 330h1v1h-1zM354 330h1v1h-1zM355 330h1v1h-1zM356 330h1v1h-1zM353 329h1v1h-1zM354 329h1v1h-1zM355 329h1v1h-1zM353 328h1v1h-1zM354 328h1v1h-1zM355 328h1v1h-1zM353 327h1v1h-1zM354 327h1v1h-1zM355 327h1v1h-1zM354 326h1v1h-1zM354 325h1v1h-1z"/><path fill="#FFFF00" d="M350 337h1v1h-1zM351 337h1v1h-1zM352 337h1v1h-1zM353 337h1v1h-1zM354 337h1v1h-1zM355 337h1v1h-1zM356 337h1v1h-1zM357 337h1v1h-1zM358 337h1v1h-1zM350 336h1v1h-1zM351 336h1v1h-1zM352 336h1v1h-1zM353 336h1v1h-1zM354 336h1v1h-1zM355 336h1v1h-1zM356 336h1v1h-1zM357 336h1v1h-1zM358 336h1v1h-1zM351 335h1v1h-1zM352 335h1v1h-1zM353 335h1v1h-1zM354 335h1v1h-1zM355 335h1v1h-1zM356 335h1v1h-1zM357 335h1v1h-1zM351 334h1v1h-1zM352 334h1v1h-1zM353 334h1v1h-1zM354 334h1v1h-1zM355 334h1v1h-1zM356 334h1v1h-1zM357 334h1v1h-1zM354 333h1v1h-1zM355 333h1v1h-1zM356 333h1v1h-1zM357 333h1v1h-1z"/><path fill="#000" d="M350 499h1v1h-1zM351 499h1v1h-1zM352 499h1v1h-1zM353 499h1v1h-1zM354 499h1v1h-1zM355 499h1v1h-1zM356 499h1v1h-1zM357 499h1v1h-1zM358 499h1v1h-1zM350 500h1v1h-1zM351 500h1v1h-1zM352 500h1v1h-1zM353 500h1v1h-1zM354 500h1v1h-1zM355 500h1v1h-1zM356 500h1v1h-1zM357 500h1v1h-1zM358 500h1v1h-1zM351 503h1v1h-1zM352 503h1v1h-1zM353 503h1v1h-1zM354 503h1v1h-1zM355 503h1v1h-1zM356 503h1v1h-1zM357 503h1v1h-1zM352 504h1v1h-1zM353 504h1v1h-1zM354 504h1v1h-1zM355 504h1v1h-1zM356 504h1v1h-1zM352 505h1v1h-1zM353 505h1v1h-1zM354 505h1v1h-1zM355 505h1v1h-1zM356 505h1v1h-1zM352 506h1v1h-1zM353 506h1v1h-1zM354 506h1v1h-1zM355 506h1v1h-1zM356 506h1v1h-1zM353 507h1v1h-1zM354 507h1v1h-1zM355 507h1v1h-1zM353 508h1v1h-1zM354 508h1v1h-1zM355 508h1v1h-1zM353 509h1v1h-1zM354 509h1v1h-1zM355 509h1v1h-1zM354 510h1v1h-1zM354 511h1v1h-1z"/><path fill="#FFFF00" d="M351 501h1v1h-1zM352 501h1v1h-1zM353 501h1v1h-1zM354 501h1v1h-1zM355 501h1v1h-1zM356 501h1v1h-1zM357 501h1v1h-1zM351 502h1v1h-1zM352 502h1v1h-1zM353 502h1v1h-1zM354 502h1v1h-1zM355 502h1v1h-1zM356 502h1v1h-1zM357 502h1v1h-1z"/><path fill="#000" d="M224 415h1v1h-1zM224 416h1v1h-1zM224 417h1v1h-1zM224 418h1v1h-1zM223 419h1v1h-1zM223 420h1v1h-1zM223 421h1v1h-1zM222 416h1v1h-1zM222 417h1v1h-1zM222 418h1v1h-1zM222 419h1v1h-1zM222 420h1v1h-1zM221 416h1v1h-1zM221 417h1v1h-1zM221 418h1v1h-1zM221 419h1v1h-1zM221 420h1v1h-1zM220 416h1v1h-1zM220 417h1v1h-1zM220 418h1v1h-1zM220 419h1v1h-1zM220 420h1v1h-1zM219 417h1v1h-1zM219 418h1v1h-1zM219 419h1v1h-1zM218 417h1v1h-1zM218 418h1v1h-1zM218 419h1v1h-1zM217 417h1v1h-1zM217 418h1v1h-1zM217 419h1v1h-1zM216 418h1v1h-1zM215 418h1v1h-1z"/><path fill="#FFFF00" d="M227 414h1v1h-1zM227 415h1v1h-1zM227 416h1v1h-1zM227 417h1v1h-1zM227 418h1v1h-1zM227 419h1v1h-1zM227 420h1v1h-1zM227 421h1v1h-1zM227 422h1v1h-1zM226 414h1v1h-1zM226 415h1v1h-1zM226 416h1v1h-1zM226 417h1v1h-1zM226 418h1v1h-1zM226 419h1v1h-1zM226 420h1v1h-1zM226 421h1v1h-1zM226 422h1v1h-1zM225 415h1v1h-1zM225 416h1v1h-1zM225 417h1v1h-1zM225 418h1v1h-1zM225 419h1v1h-1zM225 420h1v1h-1zM225 421h1v1h-1zM224 419h1v1h-1zM224 420h1v1h-1zM224 421h1v1h-1zM223 415h1v1h-1zM223 416h1v1h-1zM223 417h1v1h-1zM223 418h1v1h-1z"/><path fill="#000" d="M485 415h1v1h-1zM485 416h1v1h-1zM485 417h1v1h-1zM485 418h1v1h-1zM485 419h1v1h-1zM485 420h1v1h-1zM485 421h1v1h-1zM486 416h1v1h-1zM486 417h1v1h-1zM486 418h1v1h-1zM486 419h1v1h-1zM486 420h1v1h-1zM487 416h1v1h-1zM487 417h1v1h-1zM487 418h1v1h-1zM487 419h1v1h-1zM487 420h1v1h-1zM488 416h1v1h-1zM488 417h1v1h-1zM488 418h1v1h-1zM488 419h1v1h-1zM488 420h1v1h-1zM489 417h1v1h-1zM489 418h1v1h-1zM489 419h1v1h-1zM490 417h1v1h-1zM490 418h1v1h-1zM490 419h1v1h-1zM491 417h1v1h-1zM491 418h1v1h-1zM491 419h1v1h-1zM492 418h1v1h-1zM493 418h1v1h-1z"/><path fill="#FFFF00" d="M481 414h1v1h-1zM481 415h1v1h-1zM481 416h1v1h-1zM481 417h1v1h-1zM481 418h1v1h-1zM481 419h1v1h-1zM481 420h1v1h-1zM481 421h1v1h-1zM481 422h1v1h-1zM482 414h1v1h-1zM482 415h1v1h-1zM482 416h1v1h-1zM482 417h1v1h-1zM482 418h1v1h-1zM482 419h1v1h-1zM482 420h1v1h-1zM482 421h1v1h-1zM482 422h1v1h-1zM483 415h1v1h-1zM483 416h1v1h-1zM483 417h1v1h-1zM483 418h1v1h-1zM483 419h1v1h-1zM483 420h1v1h-1zM483 421h1v1h-1zM484 415h1v1h-1zM484 416h1v1h-1zM484 417h1v1h-1zM484 418h1v1h-1zM484 419h1v1h-1zM484 420h1v1h-1zM484 421h1v1h-1z"/></svg>
<div style="left:528px;top:320px;width:305px;height:197px;background:#D4D0C8;border-style:solid;border-width:1px 2px 2px 1px;border-color:#D4D0C8 #404040 #404040 #D4D0C8;"></div>
<div style="left:529px;top:321px;width:303px;height:195px;border:1px solid;border-color:#fff #808080 #808080 #fff;"></div>
<div style="left:531px;top:323px;width:299px;height:18px;background:linear-gradient(to right,#0A246A,#A6CAF0);"></div>
<span class="t" style="left:533px;top:324px;font-size:11px;line-height:16px;color:#fff;font-weight:bold;transform:scaleX(1.0664);">Propriétés du polygone</span>
<div class="btn" style="left:812px;top:325px;width:16px;height:14px;"></div>
<svg style="left:816px;top:328px" width="8" height="7" viewBox="0 0 8 7" shape-rendering="crispEdges"><path d="M0 0h2v1h-2zM6 0h2v1h-2zM1 1h2v1h-2zM5 1h2v1h-2zM2 2h4v1h-4zM3 3h2v1h-2zM2 4h4v1h-4zM1 5h2v1h-2zM5 5h2v1h-2zM0 6h2v1h-2zM6 6h2v1h-2z" fill="#000"/></svg>
<span class="t" style="left:545px;top:356px;font-size:12px;line-height:18px;color:#000;transform:scaleX(0.8704);">Largeur</span>
<div class="edit" style="left:585px;top:355px;width:45px;height:20px;"></div>
<div style="left:588px;top:358px;width:22px;height:13px;background:#0A246A;"></div>
<span class="t" style="left:589px;top:356px;font-size:12px;line-height:18px;color:#fff;transform:scaleX(0.8563);">69.1</span>
<span class="t" style="left:640px;top:356px;font-size:12px;line-height:18px;color:#000;transform:scaleX(0.8667);">Hauteur</span>
<div class="edit" style="left:681px;top:355px;width:45px;height:20px;"></div>
<span class="t" style="left:685px;top:356px;font-size:12px;line-height:18px;color:#000;transform:scaleX(0.8658);">44.78</span>
<span class="t" style="left:554px;top:387px;font-size:12px;line-height:18px;color:#000;transform:scaleX(0.8797);">Angle</span>
<div class="edit" style="left:585px;top:386px;width:45px;height:20px;"></div>
<span class="t" style="left:589px;top:387px;font-size:12px;line-height:18px;color:#000;transform:scaleX(0.8990);">0</span>
<span class="t" style="left:643px;top:387px;font-size:12px;line-height:18px;color:#000;transform:scaleX(0.8789);">Incliner</span>
<div class="edit" style="left:681px;top:386px;width:45px;height:20px;"></div>
<span class="t" style="left:685px;top:387px;font-size:12px;line-height:18px;color:#000;transform:scaleX(0.8990);">0</span>
<span class="t" style="left:548px;top:420px;font-size:12px;line-height:18px;color:#000;transform:scaleX(0.8995);">Aspect</span>
<div class="edit" style="left:585px;top:418px;width:45px;height:20px;"></div>
<span class="t" style="left:588.5px;top:419px;font-size:12px;line-height:18px;color:#000;transform:scaleX(0.6743);">1</span>
<div class="edit" style="left:642px;top:422px;width:13px;height:13px;"></div>
<svg style="left:645px;top:425px" width="7" height="7" shape-rendering="crispEdges"><path fill="#000" d="M6 0h1v1h-1zM5 1h2v1h-2zM0 2h1v1h-1zM4 2h3v1h-3zM0 3h2v1h-2zM3 3h3v1h-3zM0 4h5v1h-5zM1 5h3v1h-3zM2 6h1v1h-1z"/></svg>
<span class="t" style="left:660px;top:419px;font-size:12px;line-height:18px;color:#000;transform:scaleX(0.8708);">Garder l'aspect pour la saisie</span>
<span class="t" style="left:545px;top:452px;font-size:12px;line-height:18px;color:#000;transform:scaleX(0.8567);">Couleur</span>
<div class="edit" style="left:585px;top:451px;width:45px;height:18px;"></div>
<div style="left:589px;top:454px;width:21px;height:12px;background:#000;"></div>
<div class="btn" style="left:612px;top:453px;width:15px;height:14px;border-color:#D4D0C8 #404040 #404040 #D4D0C8;"></div>
<div style="left:613px;top:454px;width:12px;height:11px;border-left:1px solid #fff;border-top:1px solid #fff;"></div>
<svg style="left:616px;top:459px" width="5" height="3" shape-rendering="crispEdges"><path fill="#000" d="M0 0h5v1h-5zM1 1h3v1h-3zM2 2h1v1h-1z"/></svg>
<div style="left:647px;top:452px;width:174px;height:51px;border:1px solid;border-color:#808080 #fff #fff #808080;"></div>
<div style="left:648px;top:453px;width:172px;height:49px;border:1px solid;border-color:#fff #808080 #808080 #fff;"></div>
<div style="left:654px;top:450px;width:67px;height:6px;background:#D4D0C8;"></div>
<div class="edit" style="left:662px;top:447px;width:13px;height:13px;"></div>
<svg style="left:665px;top:450px" width="7" height="7" shape-rendering="crispEdges"><path fill="#000" d="M6 0h1v1h-1zM5 1h2v1h-2zM0 2h1v1h-1zM4 2h3v1h-3zM0 3h2v1h-2zM3 3h3v1h-3zM0 4h5v1h-5zM1 5h3v1h-3zM2 6h1v1h-1z"/></svg>
<span class="t" style="left:680px;top:445px;font-size:12px;line-height:18px;color:#000;transform:scaleX(0.8467);">Remplir</span>
<span class="t" style="left:666px;top:470px;font-size:12px;line-height:18px;color:#000;transform:scaleX(0.8947);">Pas</span>
<div class="edit" style="left:690px;top:469px;width:45px;height:20px;"></div>
<span class="t" style="left:693.5px;top:470px;font-size:12px;line-height:18px;color:#000;transform:scaleX(0.8992);">0.2</span>
<div class="edit" style="left:749px;top:472px;width:13px;height:13px;"></div>
<svg style="left:752px;top:475px" width="7" height="7" shape-rendering="crispEdges"><path fill="#000" d="M6 0h1v1h-1zM5 1h2v1h-2zM0 2h1v1h-1zM4 2h3v1h-3zM0 3h2v1h-2zM3 3h3v1h-3zM0 4h5v1h-5zM1 5h3v1h-3zM2 6h1v1h-1z"/></svg>
<span class="t" style="left:767px;top:470px;font-size:12px;line-height:18px;color:#000;transform:scaleX(0.8667);">Contour</span>
<div style="left:744px;top:353px;width:75px;height:23px;border:1px solid #000;"></div>
<div class="btn" style="left:745px;top:354px;width:73px;height:21px;"></div>
<span class="t" style="left:775px;top:355px;font-size:12px;line-height:18px;color:#000;transform:scaleX(0.8075);">OK</span>
<div class="btn" style="left:744px;top:381px;width:75px;height:23px;"></div>
<span class="t" style="left:763px;top:383px;font-size:12px;line-height:18px;color:#000;transform:scaleX(0.8704);">Annuler</span>
</body></html>
